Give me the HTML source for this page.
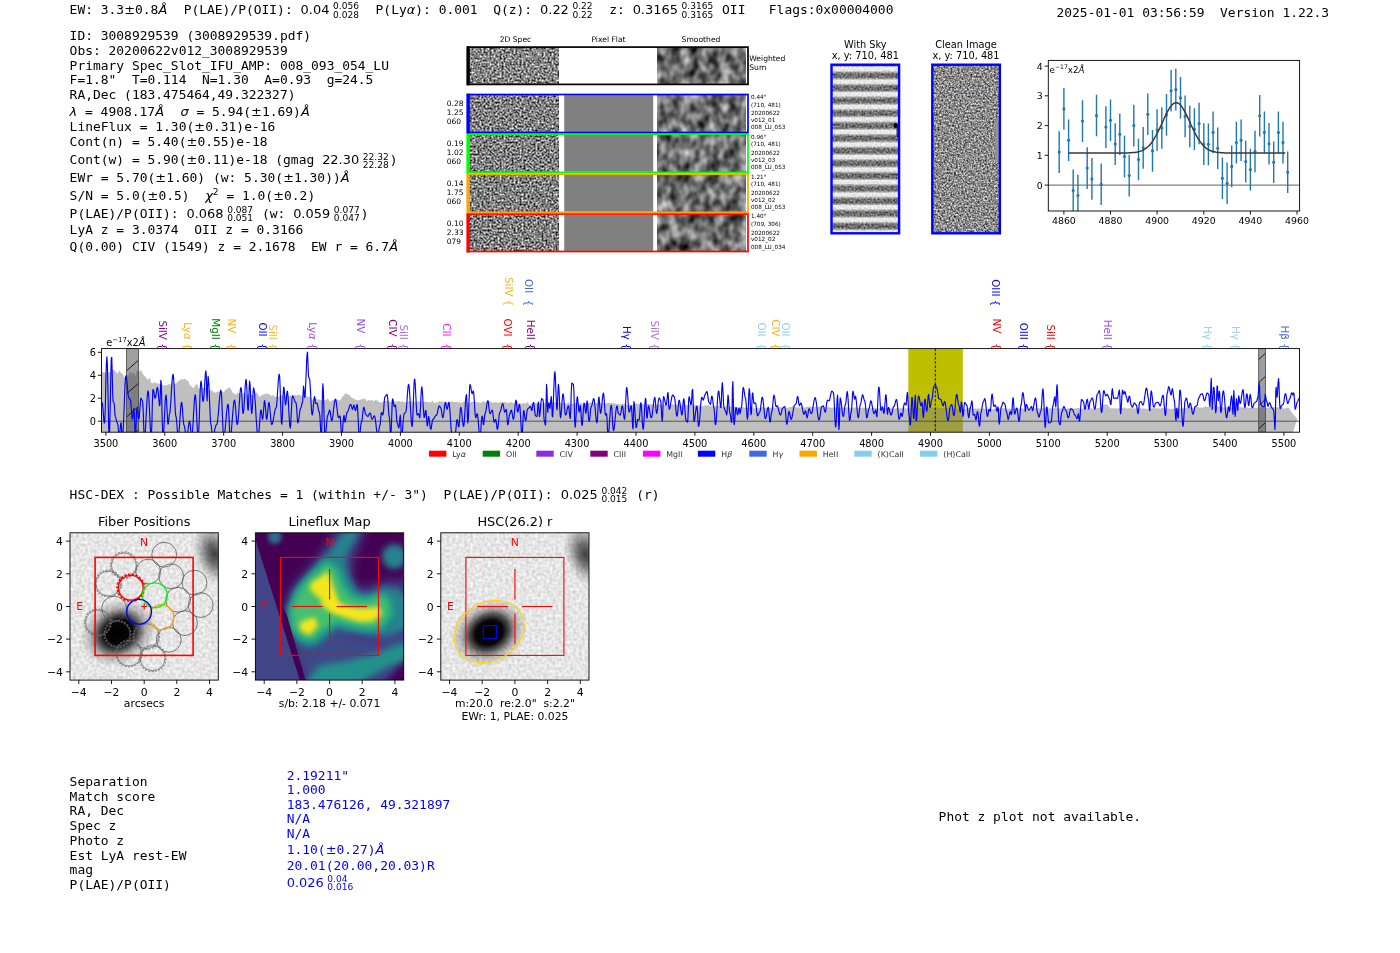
<!DOCTYPE html>
<html lang="en"><head><meta charset="utf-8"><title>Detection 3008929539</title>
<style>html,body{margin:0;padding:0;background:#fff;overflow:hidden}svg{display:block;will-change:transform;opacity:0.9999}text{white-space:pre}</style>
</head><body>
<svg width="1400" height="953" viewBox="0 0 1400 953">
<defs><filter id="nz1" x="0" y="0" width="100%" height="100%" filterUnits="objectBoundingBox" color-interpolation-filters="sRGB"><feTurbulence type="fractalNoise" baseFrequency="0.5" numOctaves="2" seed="3" stitchTiles="noStitch" result="t"/><feColorMatrix type="matrix" values="1.55 0 0 0 -0.255  1.55 0 0 0 -0.255  1.55 0 0 0 -0.255  0 0 0 0 1"/></filter><filter id="nz2" x="0" y="0" width="100%" height="100%" filterUnits="objectBoundingBox" color-interpolation-filters="sRGB"><feTurbulence type="fractalNoise" baseFrequency="0.5" numOctaves="2" seed="7" stitchTiles="noStitch" result="t"/><feColorMatrix type="matrix" values="1.6 0 0 0 -0.30000000000000004  1.6 0 0 0 -0.30000000000000004  1.6 0 0 0 -0.30000000000000004  0 0 0 0 1"/></filter><filter id="nz3" x="0" y="0" width="100%" height="100%" filterUnits="objectBoundingBox" color-interpolation-filters="sRGB"><feTurbulence type="fractalNoise" baseFrequency="0.5" numOctaves="2" seed="11" stitchTiles="noStitch" result="t"/><feColorMatrix type="matrix" values="1.6 0 0 0 -0.30000000000000004  1.6 0 0 0 -0.30000000000000004  1.6 0 0 0 -0.30000000000000004  0 0 0 0 1"/></filter><filter id="nz4" x="0" y="0" width="100%" height="100%" filterUnits="objectBoundingBox" color-interpolation-filters="sRGB"><feTurbulence type="fractalNoise" baseFrequency="0.5" numOctaves="2" seed="19" stitchTiles="noStitch" result="t"/><feColorMatrix type="matrix" values="1.6 0 0 0 -0.30000000000000004  1.6 0 0 0 -0.30000000000000004  1.6 0 0 0 -0.30000000000000004  0 0 0 0 1"/></filter><filter id="nz5" x="0" y="0" width="100%" height="100%" filterUnits="objectBoundingBox" color-interpolation-filters="sRGB"><feTurbulence type="fractalNoise" baseFrequency="0.5" numOctaves="2" seed="23" stitchTiles="noStitch" result="t"/><feColorMatrix type="matrix" values="1.6 0 0 0 -0.30000000000000004  1.6 0 0 0 -0.30000000000000004  1.6 0 0 0 -0.30000000000000004  0 0 0 0 1"/></filter><filter id="sm0" x="0" y="0" width="100%" height="100%" filterUnits="objectBoundingBox" color-interpolation-filters="sRGB"><feTurbulence type="fractalNoise" baseFrequency="0.1 0.075" numOctaves="2" seed="2" stitchTiles="noStitch" result="t"/><feColorMatrix type="matrix" values="1.15 0 0 0 -0.14499999999999996  1.15 0 0 0 -0.14499999999999996  1.15 0 0 0 -0.14499999999999996  0 0 0 0 1"/></filter><filter id="sm1" x="0" y="0" width="100%" height="100%" filterUnits="objectBoundingBox" color-interpolation-filters="sRGB"><feTurbulence type="fractalNoise" baseFrequency="0.1 0.075" numOctaves="2" seed="5" stitchTiles="noStitch" result="t"/><feColorMatrix type="matrix" values="1.15 0 0 0 -0.14499999999999996  1.15 0 0 0 -0.14499999999999996  1.15 0 0 0 -0.14499999999999996  0 0 0 0 1"/></filter><filter id="sm2" x="0" y="0" width="100%" height="100%" filterUnits="objectBoundingBox" color-interpolation-filters="sRGB"><feTurbulence type="fractalNoise" baseFrequency="0.1 0.075" numOctaves="2" seed="9" stitchTiles="noStitch" result="t"/><feColorMatrix type="matrix" values="1.15 0 0 0 -0.14499999999999996  1.15 0 0 0 -0.14499999999999996  1.15 0 0 0 -0.14499999999999996  0 0 0 0 1"/></filter><filter id="sm3" x="0" y="0" width="100%" height="100%" filterUnits="objectBoundingBox" color-interpolation-filters="sRGB"><feTurbulence type="fractalNoise" baseFrequency="0.1 0.075" numOctaves="2" seed="14" stitchTiles="noStitch" result="t"/><feColorMatrix type="matrix" values="1.15 0 0 0 -0.14499999999999996  1.15 0 0 0 -0.14499999999999996  1.15 0 0 0 -0.14499999999999996  0 0 0 0 1"/></filter><filter id="sm4" x="0" y="0" width="100%" height="100%" filterUnits="objectBoundingBox" color-interpolation-filters="sRGB"><feTurbulence type="fractalNoise" baseFrequency="0.1 0.075" numOctaves="2" seed="21" stitchTiles="noStitch" result="t"/><feColorMatrix type="matrix" values="1.15 0 0 0 -0.14499999999999996  1.15 0 0 0 -0.14499999999999996  1.15 0 0 0 -0.14499999999999996  0 0 0 0 1"/></filter></defs><defs><filter id="sky1" x="0" y="0" width="100%" height="100%" filterUnits="objectBoundingBox" color-interpolation-filters="sRGB"><feTurbulence type="fractalNoise" baseFrequency="0.5" numOctaves="2" seed="31" stitchTiles="noStitch" result="t"/><feColorMatrix type="matrix" values="1.5 0 0 0 -0.25  1.5 0 0 0 -0.25  1.5 0 0 0 -0.25  0 0 0 0 1"/></filter><filter id="sky2" x="0" y="0" width="100%" height="100%" filterUnits="objectBoundingBox" color-interpolation-filters="sRGB"><feTurbulence type="fractalNoise" baseFrequency="0.55" numOctaves="2" seed="37" stitchTiles="noStitch" result="t"/><feColorMatrix type="matrix" values="1.25 0 0 0 -0.07999999999999996  1.25 0 0 0 -0.07999999999999996  1.25 0 0 0 -0.07999999999999996  0 0 0 0 1"/></filter><linearGradient id="stripe" x1="0" y1="0" x2="0" y2="12.55" gradientUnits="userSpaceOnUse" spreadMethod="repeat"><stop offset="0" stop-color="#fff" stop-opacity="0.85"/><stop offset="0.26" stop-color="#fff" stop-opacity="0.8"/><stop offset="0.52" stop-color="#555" stop-opacity="0.48"/><stop offset="0.76" stop-color="#555" stop-opacity="0.48"/><stop offset="1" stop-color="#fff" stop-opacity="0.85"/></linearGradient></defs><defs><filter id="bg1" x="0" y="0" width="100%" height="100%" filterUnits="objectBoundingBox" color-interpolation-filters="sRGB"><feTurbulence type="fractalNoise" baseFrequency="0.34" numOctaves="1" seed="41" stitchTiles="noStitch" result="t"/><feColorMatrix type="matrix" values="0.27 0 0 0 0.765  0.27 0 0 0 0.765  0.27 0 0 0 0.765  0 0 0 0 1"/></filter><filter id="bg2" x="0" y="0" width="100%" height="100%" filterUnits="objectBoundingBox" color-interpolation-filters="sRGB"><feTurbulence type="fractalNoise" baseFrequency="0.34" numOctaves="1" seed="41" stitchTiles="noStitch" result="t"/><feColorMatrix type="matrix" values="0.27 0 0 0 0.765  0.27 0 0 0 0.765  0.27 0 0 0 0.765  0 0 0 0 1"/></filter><radialGradient id="gal"><stop offset="0" stop-color="#000" stop-opacity="1"/><stop offset="0.36" stop-color="#000" stop-opacity="0.97"/><stop offset="0.52" stop-color="#111" stop-opacity="0.72"/><stop offset="0.72" stop-color="#333" stop-opacity="0.3"/><stop offset="1" stop-color="#555" stop-opacity="0"/></radialGradient><radialGradient id="gal2"><stop offset="0" stop-color="#222" stop-opacity="0.85"/><stop offset="0.35" stop-color="#333" stop-opacity="0.66"/><stop offset="0.7" stop-color="#555" stop-opacity="0.3"/><stop offset="1" stop-color="#777" stop-opacity="0"/></radialGradient><filter id="blur3" x="-20%" y="-20%" width="140%" height="140%"><feGaussianBlur stdDeviation="3.2"/></filter><filter id="blur2" x="-20%" y="-20%" width="140%" height="140%"><feGaussianBlur stdDeviation="2.0"/></filter><filter id="blur25" x="-20%" y="-20%" width="140%" height="140%"><feGaussianBlur stdDeviation="2.4"/></filter><filter id="blur5" x="-30%" y="-30%" width="160%" height="160%"><feGaussianBlur stdDeviation="5.5"/></filter></defs>
<rect x="0" y="0" width="1400" height="953" fill="#fff"/>
<text font-family="'DejaVu Sans Mono','Liberation Mono',monospace" font-size="12.95" fill="#000" xml:space="preserve"><tspan x="69.60" y="13.9">EW: 3.3</tspan><tspan x="124.17" y="13.9" font-family="'DejaVu Sans','Liberation Sans',sans-serif">±</tspan><tspan x="135.02" y="13.9">0.8</tspan><tspan x="158.41" y="13.9" font-family="'DejaVu Sans','Liberation Sans',sans-serif" font-style="italic">Å</tspan><tspan x="168.07" y="13.9">  P(LAE)/P(OII): </tspan><tspan x="300.61" y="13.9" font-family="'DejaVu Sans','Liberation Sans',sans-serif">0.04</tspan><tspan x="333.04" y="9.30" font-family="'DejaVu Sans','Liberation Sans',sans-serif" font-size="9.06">0.056</tspan><tspan x="333.04" y="17.60" font-family="'DejaVu Sans','Liberation Sans',sans-serif" font-size="9.06">0.028</tspan><tspan x="360.00" y="13.9">  P(Ly</tspan><tspan x="406.77" y="13.9" font-family="'DejaVu Sans','Liberation Sans',sans-serif" font-style="italic">α</tspan><tspan x="415.31" y="13.9">): 0.001  Q(z): </tspan><tspan x="540.05" y="13.9" font-family="'DejaVu Sans','Liberation Sans',sans-serif">0.22</tspan><tspan x="572.49" y="9.30" font-family="'DejaVu Sans','Liberation Sans',sans-serif" font-size="9.06">0.22</tspan><tspan x="572.49" y="17.60" font-family="'DejaVu Sans','Liberation Sans',sans-serif" font-size="9.06">0.22</tspan><tspan x="593.67" y="13.9">  z: </tspan><tspan x="632.65" y="13.9" font-family="'DejaVu Sans','Liberation Sans',sans-serif">0.3165</tspan><tspan x="681.57" y="9.30" font-family="'DejaVu Sans','Liberation Sans',sans-serif" font-size="9.06">0.3165</tspan><tspan x="681.57" y="17.60" font-family="'DejaVu Sans','Liberation Sans',sans-serif" font-size="9.06">0.3165</tspan><tspan x="714.29" y="13.9"> OII   Flags:0x00004000</tspan></text>
<text font-family="'DejaVu Sans Mono','Liberation Mono',monospace" font-size="12.95" fill="#000" xml:space="preserve"><tspan x="1056.50" y="16.7">2025-01-01 03:56:59  Version 1.22.3</tspan></text>
<text font-family="'DejaVu Sans Mono','Liberation Mono',monospace" font-size="12.95" fill="#000" xml:space="preserve"><tspan x="69.60" y="40.0">ID: 3008929539 (3008929539.pdf)</tspan></text>
<text font-family="'DejaVu Sans Mono','Liberation Mono',monospace" font-size="12.95" fill="#000" xml:space="preserve"><tspan x="69.60" y="54.8">Obs: 20200622v012_3008929539</tspan></text>
<text font-family="'DejaVu Sans Mono','Liberation Mono',monospace" font-size="12.95" fill="#000" xml:space="preserve"><tspan x="69.60" y="69.6">Primary Spec_Slot_IFU_AMP: 008_093_054_LU</tspan></text>
<text font-family="'DejaVu Sans Mono','Liberation Mono',monospace" font-size="12.95" fill="#000" xml:space="preserve"><tspan x="69.60" y="84.4">F=1.8"  T=0.114  N=1.30  A=0.93  g=24.5</tspan></text>
<text font-family="'DejaVu Sans Mono','Liberation Mono',monospace" font-size="12.95" fill="#000" xml:space="preserve"><tspan x="69.60" y="99.3">RA,Dec (183.475464,49.322327)</tspan></text>
<text font-family="'DejaVu Sans Mono','Liberation Mono',monospace" font-size="12.95" fill="#000" xml:space="preserve"><tspan x="69.60" y="116.4" font-family="'DejaVu Sans','Liberation Sans',sans-serif" font-style="italic">λ</tspan><tspan x="77.26" y="116.4"> = 4908.17</tspan><tspan x="155.23" y="116.4" font-family="'DejaVu Sans','Liberation Sans',sans-serif" font-style="italic">Å</tspan><tspan x="164.89" y="116.4">  </tspan><tspan x="180.48" y="116.4" font-family="'DejaVu Sans','Liberation Sans',sans-serif" font-style="italic">σ</tspan><tspan x="188.69" y="116.4"> = 5.94(</tspan><tspan x="251.06" y="116.4" font-family="'DejaVu Sans','Liberation Sans',sans-serif">±</tspan><tspan x="261.91" y="116.4">1.69)</tspan><tspan x="300.89" y="116.4" font-family="'DejaVu Sans','Liberation Sans',sans-serif" font-style="italic">Å</tspan></text>
<text font-family="'DejaVu Sans Mono','Liberation Mono',monospace" font-size="12.95" fill="#000" xml:space="preserve"><tspan x="69.60" y="131.4">LineFlux = 1.30(</tspan><tspan x="194.34" y="131.4" font-family="'DejaVu Sans','Liberation Sans',sans-serif">±</tspan><tspan x="205.19" y="131.4">0.31)e-16</tspan></text>
<text font-family="'DejaVu Sans Mono','Liberation Mono',monospace" font-size="12.95" fill="#000" xml:space="preserve"><tspan x="69.60" y="146.2">Cont(n) = 5.40(</tspan><tspan x="186.54" y="146.2" font-family="'DejaVu Sans','Liberation Sans',sans-serif">±</tspan><tspan x="197.40" y="146.2">0.55)e-18</tspan></text>
<text font-family="'DejaVu Sans Mono','Liberation Mono',monospace" font-size="12.95" fill="#000" xml:space="preserve"><tspan x="69.60" y="164.3">Cont(w) = 5.90(</tspan><tspan x="186.54" y="164.3" font-family="'DejaVu Sans','Liberation Sans',sans-serif">±</tspan><tspan x="197.40" y="164.3">0.11)e-18 (gmag </tspan><tspan x="322.14" y="164.3" font-family="'DejaVu Sans','Liberation Sans',sans-serif">22.30</tspan><tspan x="362.81" y="159.70" font-family="'DejaVu Sans','Liberation Sans',sans-serif" font-size="9.06">22.32</tspan><tspan x="362.81" y="168.00" font-family="'DejaVu Sans','Liberation Sans',sans-serif" font-size="9.06">22.28</tspan><tspan x="389.76" y="164.3">)</tspan></text>
<text font-family="'DejaVu Sans Mono','Liberation Mono',monospace" font-size="12.95" fill="#000" xml:space="preserve"><tspan x="69.60" y="182.3">EWr = 5.70(</tspan><tspan x="155.36" y="182.3" font-family="'DejaVu Sans','Liberation Sans',sans-serif">±</tspan><tspan x="166.21" y="182.3">1.60) (w: 5.30(</tspan><tspan x="283.15" y="182.3" font-family="'DejaVu Sans','Liberation Sans',sans-serif">±</tspan><tspan x="294.01" y="182.3">1.30))</tspan><tspan x="340.78" y="182.3" font-family="'DejaVu Sans','Liberation Sans',sans-serif" font-style="italic">Å</tspan></text>
<text font-family="'DejaVu Sans Mono','Liberation Mono',monospace" font-size="12.95" fill="#000" xml:space="preserve"><tspan x="69.60" y="199.9">S/N = 5.0(</tspan><tspan x="147.56" y="199.9" font-family="'DejaVu Sans','Liberation Sans',sans-serif">±</tspan><tspan x="158.41" y="199.9">0.5)  </tspan><tspan x="205.19" y="199.9" font-family="'DejaVu Sans','Liberation Sans',sans-serif" font-style="italic">χ</tspan><tspan x="212.86" y="195.10" font-family="'DejaVu Sans','Liberation Sans',sans-serif" font-size="9.06">2</tspan><tspan x="218.62" y="199.9"> = 1.0(</tspan><tspan x="273.20" y="199.9" font-family="'DejaVu Sans','Liberation Sans',sans-serif">±</tspan><tspan x="284.05" y="199.9">0.2)</tspan></text>
<text font-family="'DejaVu Sans Mono','Liberation Mono',monospace" font-size="12.95" fill="#000" xml:space="preserve"><tspan x="69.60" y="217.5">P(LAE)/P(OII): </tspan><tspan x="186.54" y="217.5" font-family="'DejaVu Sans','Liberation Sans',sans-serif">0.068</tspan><tspan x="227.22" y="212.90" font-family="'DejaVu Sans','Liberation Sans',sans-serif" font-size="9.06">0.087</tspan><tspan x="227.22" y="221.20" font-family="'DejaVu Sans','Liberation Sans',sans-serif" font-size="9.06">0.051</tspan><tspan x="254.17" y="217.5"> (w: </tspan><tspan x="293.15" y="217.5" font-family="'DejaVu Sans','Liberation Sans',sans-serif">0.059</tspan><tspan x="333.83" y="212.90" font-family="'DejaVu Sans','Liberation Sans',sans-serif" font-size="9.06">0.077</tspan><tspan x="333.83" y="221.20" font-family="'DejaVu Sans','Liberation Sans',sans-serif" font-size="9.06">0.047</tspan><tspan x="360.78" y="217.5">)</tspan></text>
<text font-family="'DejaVu Sans Mono','Liberation Mono',monospace" font-size="12.95" fill="#000" xml:space="preserve"><tspan x="69.60" y="234.3">LyA z = 3.0374  OII z = 0.3166</tspan></text>
<text font-family="'DejaVu Sans Mono','Liberation Mono',monospace" font-size="12.95" fill="#000" xml:space="preserve"><tspan x="69.60" y="251.1">Q(0.00) CIV (1549) z = 2.1678  EW r = 6.7</tspan><tspan x="389.25" y="251.1" font-family="'DejaVu Sans','Liberation Sans',sans-serif" font-style="italic">Å</tspan></text>
<text font-family="'DejaVu Sans Mono','Liberation Mono',monospace" font-size="12.95" fill="#000" xml:space="preserve"><tspan x="69.60" y="498.5">HSC-DEX : Possible Matches = 1 (within +/- 3")  P(LAE)/P(OII): </tspan><tspan x="560.77" y="498.5" font-family="'DejaVu Sans','Liberation Sans',sans-serif">0.025</tspan><tspan x="601.44" y="493.90" font-family="'DejaVu Sans','Liberation Sans',sans-serif" font-size="9.06">0.042</tspan><tspan x="601.44" y="502.20" font-family="'DejaVu Sans','Liberation Sans',sans-serif" font-size="9.06">0.015</tspan><tspan x="628.39" y="498.5"> (r)</tspan></text>
<text font-family="'DejaVu Sans Mono','Liberation Mono',monospace" font-size="12.95" fill="#000" xml:space="preserve"><tspan x="69.60" y="786.0">Separation</tspan></text>
<text font-family="'DejaVu Sans Mono','Liberation Mono',monospace" font-size="12.95" fill="#000" xml:space="preserve"><tspan x="69.60" y="800.7">Match score</tspan></text>
<text font-family="'DejaVu Sans Mono','Liberation Mono',monospace" font-size="12.95" fill="#000" xml:space="preserve"><tspan x="69.60" y="815.4">RA, Dec</tspan></text>
<text font-family="'DejaVu Sans Mono','Liberation Mono',monospace" font-size="12.95" fill="#000" xml:space="preserve"><tspan x="69.60" y="830.1">Spec z</tspan></text>
<text font-family="'DejaVu Sans Mono','Liberation Mono',monospace" font-size="12.95" fill="#000" xml:space="preserve"><tspan x="69.60" y="844.8">Photo z</tspan></text>
<text font-family="'DejaVu Sans Mono','Liberation Mono',monospace" font-size="12.95" fill="#000" xml:space="preserve"><tspan x="69.60" y="859.5">Est LyA rest-EW</tspan></text>
<text font-family="'DejaVu Sans Mono','Liberation Mono',monospace" font-size="12.95" fill="#000" xml:space="preserve"><tspan x="69.60" y="874.2">mag</tspan></text>
<text font-family="'DejaVu Sans Mono','Liberation Mono',monospace" font-size="12.95" fill="#000" xml:space="preserve"><tspan x="69.60" y="888.9">P(LAE)/P(OII)</tspan></text>
<text font-family="'DejaVu Sans Mono','Liberation Mono',monospace" font-size="12.95" fill="#0000ff" xml:space="preserve"><tspan x="286.70" y="779.6">2.19211"</tspan></text>
<text font-family="'DejaVu Sans Mono','Liberation Mono',monospace" font-size="12.95" fill="#0000ff" xml:space="preserve"><tspan x="286.70" y="794.2">1.000</tspan></text>
<text font-family="'DejaVu Sans Mono','Liberation Mono',monospace" font-size="12.95" fill="#0000ff" xml:space="preserve"><tspan x="286.70" y="808.6">183.476126, 49.321897</tspan></text>
<text font-family="'DejaVu Sans Mono','Liberation Mono',monospace" font-size="12.95" fill="#0000ff" xml:space="preserve"><tspan x="286.70" y="823.0">N/A</tspan></text>
<text font-family="'DejaVu Sans Mono','Liberation Mono',monospace" font-size="12.95" fill="#0000ff" xml:space="preserve"><tspan x="286.70" y="837.5">N/A</tspan></text>
<text font-family="'DejaVu Sans Mono','Liberation Mono',monospace" font-size="12.95" fill="#0000ff" xml:space="preserve"><tspan x="286.70" y="853.5">1.10(</tspan><tspan x="325.68" y="853.5" font-family="'DejaVu Sans','Liberation Sans',sans-serif">±</tspan><tspan x="336.53" y="853.5">0.27)</tspan><tspan x="375.51" y="853.5" font-family="'DejaVu Sans','Liberation Sans',sans-serif" font-style="italic">Å</tspan></text>
<text font-family="'DejaVu Sans Mono','Liberation Mono',monospace" font-size="12.95" fill="#0000ff" xml:space="preserve"><tspan x="286.70" y="869.8">20.01(20.00,20.03)R</tspan></text>
<text font-family="'DejaVu Sans Mono','Liberation Mono',monospace" font-size="12.95" fill="#0000ff" xml:space="preserve"><tspan x="286.70" y="886.5" font-family="'DejaVu Sans','Liberation Sans',sans-serif">0.026</tspan><tspan x="327.37" y="881.90" font-family="'DejaVu Sans','Liberation Sans',sans-serif" font-size="9.06">0.04</tspan><tspan x="327.37" y="890.20" font-family="'DejaVu Sans','Liberation Sans',sans-serif" font-size="9.06">0.016</tspan></text>
<text font-family="'DejaVu Sans Mono','Liberation Mono',monospace" font-size="12.95" fill="#000" xml:space="preserve"><tspan x="938.60" y="821.2">Phot z plot not available.</tspan></text>
<text x="515.5" y="42.0" font-family="'DejaVu Sans','Liberation Sans',sans-serif" font-size="7.6" fill="#000" text-anchor="middle" xml:space="preserve" >2D Spec</text>
<text x="608.5" y="42.0" font-family="'DejaVu Sans','Liberation Sans',sans-serif" font-size="7.6" fill="#000" text-anchor="middle" xml:space="preserve" >Pixel Flat</text>
<text x="701.0" y="42.0" font-family="'DejaVu Sans','Liberation Sans',sans-serif" font-size="7.6" fill="#000" text-anchor="middle" xml:space="preserve" >Smoothed</text>
<text x="749.3" y="61.0" font-family="'DejaVu Sans','Liberation Sans',sans-serif" font-size="7.6" fill="#000" text-anchor="start" xml:space="preserve" >Weighted</text>
<text x="749.3" y="69.8" font-family="'DejaVu Sans','Liberation Sans',sans-serif" font-size="7.6" fill="#000" text-anchor="start" xml:space="preserve" >Sum</text>
<rect x="469.6" y="47.8" width="89.2" height="36.0" fill="#808080" filter="url(#nz1)"/>
<rect x="657.6" y="47.8" width="88.4" height="36.0" fill="#777" filter="url(#sm0)"/>
<rect x="469.6" y="95.2" width="89.2" height="36.7" fill="#808080" filter="url(#nz2)"/>
<rect x="564.2" y="95.2" width="89.0" height="36.7" fill="#808080"/>
<rect x="657.6" y="95.2" width="88.4" height="36.7" fill="#777" filter="url(#sm1)"/>
<rect x="469.6" y="134.9" width="89.2" height="36.9" fill="#808080" filter="url(#nz3)"/>
<rect x="564.2" y="134.9" width="89.0" height="36.9" fill="#808080"/>
<rect x="657.6" y="134.9" width="88.4" height="36.9" fill="#777" filter="url(#sm2)"/>
<rect x="469.6" y="174.8" width="89.2" height="36.9" fill="#808080" filter="url(#nz4)"/>
<rect x="564.2" y="174.8" width="89.0" height="36.9" fill="#808080"/>
<rect x="657.6" y="174.8" width="88.4" height="36.9" fill="#777" filter="url(#sm3)"/>
<rect x="469.6" y="214.7" width="89.2" height="36.2" fill="#808080" filter="url(#nz5)"/>
<rect x="564.2" y="214.7" width="89.0" height="36.2" fill="#808080"/>
<rect x="657.6" y="214.7" width="88.4" height="36.2" fill="#777" filter="url(#sm4)"/>
<rect x="467.5" y="214.0" width="280.5" height="37.5" fill="none" stroke="#ff0000" stroke-width="1.7"/>
<rect x="466.6" y="213.2" width="3.2" height="39.2" fill="#ff0000"/>
<rect x="467.5" y="174.2" width="280.5" height="38.2" fill="none" stroke="#ffa500" stroke-width="1.7"/>
<rect x="466.6" y="173.3" width="3.2" height="39.9" fill="#ffa500"/>
<rect x="467.5" y="134.2" width="280.5" height="38.2" fill="none" stroke="#00ff00" stroke-width="1.7"/>
<rect x="466.6" y="133.4" width="3.2" height="39.9" fill="#00ff00"/>
<rect x="467.5" y="94.5" width="280.5" height="38.0" fill="none" stroke="#0000ff" stroke-width="1.7"/>
<rect x="466.6" y="93.7" width="3.2" height="39.7" fill="#0000ff"/>
<rect x="467.5" y="47.1" width="280.5" height="37.3" fill="none" stroke="#000000" stroke-width="1.7"/>
<rect x="466.6" y="46.3" width="3.2" height="39.0" fill="#000000"/>
<text x="446.8" y="106.10000000000001" font-family="'DejaVu Sans','Liberation Sans',sans-serif" font-size="7.5" fill="#000" text-anchor="start" xml:space="preserve" >0.28</text>
<text x="446.8" y="115.10000000000001" font-family="'DejaVu Sans','Liberation Sans',sans-serif" font-size="7.5" fill="#000" text-anchor="start" xml:space="preserve" >1.25</text>
<text x="446.8" y="124.10000000000001" font-family="'DejaVu Sans','Liberation Sans',sans-serif" font-size="7.5" fill="#000" text-anchor="start" xml:space="preserve" >060</text>
<text x="751.0" y="98.9" font-family="'DejaVu Sans','Liberation Sans',sans-serif" font-size="5.7" fill="#000" text-anchor="start" xml:space="preserve" >0.44"</text>
<text x="751.0" y="106.7" font-family="'DejaVu Sans','Liberation Sans',sans-serif" font-size="5.7" fill="#000" text-anchor="start" xml:space="preserve" >(710, 481)</text>
<text x="751.0" y="115.2" font-family="'DejaVu Sans','Liberation Sans',sans-serif" font-size="5.7" fill="#000" text-anchor="start" xml:space="preserve" >20200622</text>
<text x="751.0" y="121.9" font-family="'DejaVu Sans','Liberation Sans',sans-serif" font-size="5.7" fill="#000" text-anchor="start" xml:space="preserve" >v012_01</text>
<text x="751.0" y="129.0" font-family="'DejaVu Sans','Liberation Sans',sans-serif" font-size="5.7" fill="#000" text-anchor="start" xml:space="preserve" >008_LU_053</text>
<text x="446.8" y="145.8" font-family="'DejaVu Sans','Liberation Sans',sans-serif" font-size="7.5" fill="#000" text-anchor="start" xml:space="preserve" >0.19</text>
<text x="446.8" y="154.8" font-family="'DejaVu Sans','Liberation Sans',sans-serif" font-size="7.5" fill="#000" text-anchor="start" xml:space="preserve" >1.02</text>
<text x="446.8" y="163.8" font-family="'DejaVu Sans','Liberation Sans',sans-serif" font-size="7.5" fill="#000" text-anchor="start" xml:space="preserve" >060</text>
<text x="751.0" y="138.6" font-family="'DejaVu Sans','Liberation Sans',sans-serif" font-size="5.7" fill="#000" text-anchor="start" xml:space="preserve" >0.96"</text>
<text x="751.0" y="146.4" font-family="'DejaVu Sans','Liberation Sans',sans-serif" font-size="5.7" fill="#000" text-anchor="start" xml:space="preserve" >(710, 481)</text>
<text x="751.0" y="154.9" font-family="'DejaVu Sans','Liberation Sans',sans-serif" font-size="5.7" fill="#000" text-anchor="start" xml:space="preserve" >20200622</text>
<text x="751.0" y="161.6" font-family="'DejaVu Sans','Liberation Sans',sans-serif" font-size="5.7" fill="#000" text-anchor="start" xml:space="preserve" >v012_03</text>
<text x="751.0" y="168.7" font-family="'DejaVu Sans','Liberation Sans',sans-serif" font-size="5.7" fill="#000" text-anchor="start" xml:space="preserve" >008_LU_053</text>
<text x="446.8" y="185.70000000000002" font-family="'DejaVu Sans','Liberation Sans',sans-serif" font-size="7.5" fill="#000" text-anchor="start" xml:space="preserve" >0.14</text>
<text x="446.8" y="194.70000000000002" font-family="'DejaVu Sans','Liberation Sans',sans-serif" font-size="7.5" fill="#000" text-anchor="start" xml:space="preserve" >1.75</text>
<text x="446.8" y="203.70000000000002" font-family="'DejaVu Sans','Liberation Sans',sans-serif" font-size="7.5" fill="#000" text-anchor="start" xml:space="preserve" >060</text>
<text x="751.0" y="178.5" font-family="'DejaVu Sans','Liberation Sans',sans-serif" font-size="5.7" fill="#000" text-anchor="start" xml:space="preserve" >1.21"</text>
<text x="751.0" y="186.3" font-family="'DejaVu Sans','Liberation Sans',sans-serif" font-size="5.7" fill="#000" text-anchor="start" xml:space="preserve" >(710, 481)</text>
<text x="751.0" y="194.8" font-family="'DejaVu Sans','Liberation Sans',sans-serif" font-size="5.7" fill="#000" text-anchor="start" xml:space="preserve" >20200622</text>
<text x="751.0" y="201.5" font-family="'DejaVu Sans','Liberation Sans',sans-serif" font-size="5.7" fill="#000" text-anchor="start" xml:space="preserve" >v012_02</text>
<text x="751.0" y="208.60000000000002" font-family="'DejaVu Sans','Liberation Sans',sans-serif" font-size="5.7" fill="#000" text-anchor="start" xml:space="preserve" >008_LU_053</text>
<text x="446.8" y="225.6" font-family="'DejaVu Sans','Liberation Sans',sans-serif" font-size="7.5" fill="#000" text-anchor="start" xml:space="preserve" >0.10</text>
<text x="446.8" y="234.6" font-family="'DejaVu Sans','Liberation Sans',sans-serif" font-size="7.5" fill="#000" text-anchor="start" xml:space="preserve" >2.33</text>
<text x="446.8" y="243.6" font-family="'DejaVu Sans','Liberation Sans',sans-serif" font-size="7.5" fill="#000" text-anchor="start" xml:space="preserve" >079</text>
<text x="751.0" y="218.39999999999998" font-family="'DejaVu Sans','Liberation Sans',sans-serif" font-size="5.7" fill="#000" text-anchor="start" xml:space="preserve" >1.40"</text>
<text x="751.0" y="226.2" font-family="'DejaVu Sans','Liberation Sans',sans-serif" font-size="5.7" fill="#000" text-anchor="start" xml:space="preserve" >(709, 306)</text>
<text x="751.0" y="234.7" font-family="'DejaVu Sans','Liberation Sans',sans-serif" font-size="5.7" fill="#000" text-anchor="start" xml:space="preserve" >20200622</text>
<text x="751.0" y="241.39999999999998" font-family="'DejaVu Sans','Liberation Sans',sans-serif" font-size="5.7" fill="#000" text-anchor="start" xml:space="preserve" >v012_02</text>
<text x="751.0" y="248.5" font-family="'DejaVu Sans','Liberation Sans',sans-serif" font-size="5.7" fill="#000" text-anchor="start" xml:space="preserve" >008_LU_034</text>
<text x="865.3" y="48.3" font-family="'DejaVu Sans','Liberation Sans',sans-serif" font-size="9.8" fill="#000" text-anchor="middle" xml:space="preserve" >With Sky</text>
<text x="865.3" y="59.2" font-family="'DejaVu Sans','Liberation Sans',sans-serif" font-size="9.8" fill="#000" text-anchor="middle" xml:space="preserve" >x, y: 710, 481</text>
<text x="966.0" y="48.3" font-family="'DejaVu Sans','Liberation Sans',sans-serif" font-size="9.8" fill="#000" text-anchor="middle" xml:space="preserve" >Clean Image</text>
<text x="966.0" y="59.2" font-family="'DejaVu Sans','Liberation Sans',sans-serif" font-size="9.8" fill="#000" text-anchor="middle" xml:space="preserve" >x, y: 710, 481</text>
<rect x="831.5" y="64.8" width="67.5" height="168.5" fill="#808080" filter="url(#sky1)"/>
<g transform="translate(0,55.02)"><rect x="831.5" y="9.78" width="67.5" height="168.5" fill="url(#stripe)"/></g>
<ellipse cx="895.6" cy="125.3" rx="2.0" ry="2.6" fill="#000"/><rect x="896.6" y="125" width="1.2" height="12" fill="#111"/>
<rect x="932.4" y="64.8" width="67.5" height="168.5" fill="#808080" filter="url(#sky2)"/>
<rect x="995.2" y="120" width="4" height="42" fill="#929292"/>
<rect x="831.5" y="64.7" width="67.6" height="168.6" fill="none" stroke="#0000ff" stroke-width="2.4"/>
<rect x="932.3" y="64.7" width="67.6" height="168.6" fill="none" stroke="#0000ff" stroke-width="2.4"/>
<clipPath id="cl1"><rect x="1048.3" y="60.4" width="251.3" height="150.6"/></clipPath>
<g clip-path="url(#cl1)"><line x1="1048.3" x2="1299.6" y1="185.1" y2="185.1" stroke="#808080" stroke-width="1.4"/><line x1="1059.2" x2="1059.2" y1="131.3" y2="172.9" stroke="#1f77b4" stroke-width="1.4"/><circle cx="1059.2" cy="152.1" r="1.55" fill="#1f77b4"/><line x1="1063.9" x2="1063.9" y1="88.1" y2="129.8" stroke="#1f77b4" stroke-width="1.4"/><circle cx="1063.9" cy="108.9" r="1.55" fill="#1f77b4"/><line x1="1068.6" x2="1068.6" y1="119.4" y2="161.0" stroke="#1f77b4" stroke-width="1.4"/><circle cx="1068.6" cy="140.2" r="1.55" fill="#1f77b4"/><line x1="1073.2" x2="1073.2" y1="169.6" y2="211.3" stroke="#1f77b4" stroke-width="1.4"/><circle cx="1073.2" cy="190.5" r="1.55" fill="#1f77b4"/><line x1="1077.9" x2="1077.9" y1="174.7" y2="216.3" stroke="#1f77b4" stroke-width="1.4"/><circle cx="1077.9" cy="195.5" r="1.55" fill="#1f77b4"/><line x1="1082.5" x2="1082.5" y1="100.3" y2="142.0" stroke="#1f77b4" stroke-width="1.4"/><circle cx="1082.5" cy="121.1" r="1.55" fill="#1f77b4"/><line x1="1087.2" x2="1087.2" y1="147.3" y2="189.0" stroke="#1f77b4" stroke-width="1.4"/><circle cx="1087.2" cy="168.1" r="1.55" fill="#1f77b4"/><line x1="1091.9" x2="1091.9" y1="158.0" y2="199.7" stroke="#1f77b4" stroke-width="1.4"/><circle cx="1091.9" cy="178.9" r="1.55" fill="#1f77b4"/><line x1="1096.5" x2="1096.5" y1="94.7" y2="136.3" stroke="#1f77b4" stroke-width="1.4"/><circle cx="1096.5" cy="115.5" r="1.55" fill="#1f77b4"/><line x1="1101.2" x2="1101.2" y1="163.4" y2="205.0" stroke="#1f77b4" stroke-width="1.4"/><circle cx="1101.2" cy="184.2" r="1.55" fill="#1f77b4"/><line x1="1105.9" x2="1105.9" y1="106.3" y2="147.9" stroke="#1f77b4" stroke-width="1.4"/><circle cx="1105.9" cy="127.1" r="1.55" fill="#1f77b4"/><line x1="1110.5" x2="1110.5" y1="99.4" y2="141.1" stroke="#1f77b4" stroke-width="1.4"/><circle cx="1110.5" cy="120.2" r="1.55" fill="#1f77b4"/><line x1="1115.2" x2="1115.2" y1="123.2" y2="164.9" stroke="#1f77b4" stroke-width="1.4"/><circle cx="1115.2" cy="144.0" r="1.55" fill="#1f77b4"/><line x1="1119.8" x2="1119.8" y1="113.4" y2="155.1" stroke="#1f77b4" stroke-width="1.4"/><circle cx="1119.8" cy="134.2" r="1.55" fill="#1f77b4"/><line x1="1124.5" x2="1124.5" y1="135.7" y2="177.4" stroke="#1f77b4" stroke-width="1.4"/><circle cx="1124.5" cy="156.5" r="1.55" fill="#1f77b4"/><line x1="1129.2" x2="1129.2" y1="154.8" y2="196.4" stroke="#1f77b4" stroke-width="1.4"/><circle cx="1129.2" cy="175.6" r="1.55" fill="#1f77b4"/><line x1="1133.8" x2="1133.8" y1="104.8" y2="146.4" stroke="#1f77b4" stroke-width="1.4"/><circle cx="1133.8" cy="125.6" r="1.55" fill="#1f77b4"/><line x1="1138.5" x2="1138.5" y1="138.7" y2="180.3" stroke="#1f77b4" stroke-width="1.4"/><circle cx="1138.5" cy="159.5" r="1.55" fill="#1f77b4"/><line x1="1143.2" x2="1143.2" y1="127.1" y2="168.7" stroke="#1f77b4" stroke-width="1.4"/><circle cx="1143.2" cy="147.9" r="1.55" fill="#1f77b4"/><line x1="1147.8" x2="1147.8" y1="93.5" y2="135.1" stroke="#1f77b4" stroke-width="1.4"/><circle cx="1147.8" cy="114.3" r="1.55" fill="#1f77b4"/><line x1="1152.5" x2="1152.5" y1="130.1" y2="171.7" stroke="#1f77b4" stroke-width="1.4"/><circle cx="1152.5" cy="150.9" r="1.55" fill="#1f77b4"/><line x1="1157.1" x2="1157.1" y1="109.2" y2="150.9" stroke="#1f77b4" stroke-width="1.4"/><circle cx="1157.1" cy="130.1" r="1.55" fill="#1f77b4"/><line x1="1161.8" x2="1161.8" y1="107.2" y2="148.8" stroke="#1f77b4" stroke-width="1.4"/><circle cx="1161.8" cy="128.0" r="1.55" fill="#1f77b4"/><line x1="1166.5" x2="1166.5" y1="94.1" y2="135.7" stroke="#1f77b4" stroke-width="1.4"/><circle cx="1166.5" cy="114.9" r="1.55" fill="#1f77b4"/><line x1="1171.1" x2="1171.1" y1="70.0" y2="111.6" stroke="#1f77b4" stroke-width="1.4"/><circle cx="1171.1" cy="90.8" r="1.55" fill="#1f77b4"/><line x1="1175.8" x2="1175.8" y1="68.8" y2="110.4" stroke="#1f77b4" stroke-width="1.4"/><circle cx="1175.8" cy="89.6" r="1.55" fill="#1f77b4"/><line x1="1180.5" x2="1180.5" y1="77.1" y2="118.8" stroke="#1f77b4" stroke-width="1.4"/><circle cx="1180.5" cy="97.9" r="1.55" fill="#1f77b4"/><line x1="1185.1" x2="1185.1" y1="95.6" y2="137.2" stroke="#1f77b4" stroke-width="1.4"/><circle cx="1185.1" cy="116.4" r="1.55" fill="#1f77b4"/><line x1="1189.8" x2="1189.8" y1="105.7" y2="147.3" stroke="#1f77b4" stroke-width="1.4"/><circle cx="1189.8" cy="126.5" r="1.55" fill="#1f77b4"/><line x1="1194.4" x2="1194.4" y1="108.3" y2="150.0" stroke="#1f77b4" stroke-width="1.4"/><circle cx="1194.4" cy="129.2" r="1.55" fill="#1f77b4"/><line x1="1199.1" x2="1199.1" y1="102.7" y2="144.3" stroke="#1f77b4" stroke-width="1.4"/><circle cx="1199.1" cy="123.5" r="1.55" fill="#1f77b4"/><line x1="1203.8" x2="1203.8" y1="123.2" y2="164.9" stroke="#1f77b4" stroke-width="1.4"/><circle cx="1203.8" cy="144.0" r="1.55" fill="#1f77b4"/><line x1="1208.4" x2="1208.4" y1="123.5" y2="165.2" stroke="#1f77b4" stroke-width="1.4"/><circle cx="1208.4" cy="144.3" r="1.55" fill="#1f77b4"/><line x1="1213.1" x2="1213.1" y1="111.6" y2="153.3" stroke="#1f77b4" stroke-width="1.4"/><circle cx="1213.1" cy="132.4" r="1.55" fill="#1f77b4"/><line x1="1217.7" x2="1217.7" y1="127.4" y2="169.0" stroke="#1f77b4" stroke-width="1.4"/><circle cx="1217.7" cy="148.2" r="1.55" fill="#1f77b4"/><line x1="1222.4" x2="1222.4" y1="157.4" y2="199.1" stroke="#1f77b4" stroke-width="1.4"/><circle cx="1222.4" cy="178.3" r="1.55" fill="#1f77b4"/><line x1="1227.1" x2="1227.1" y1="162.5" y2="204.1" stroke="#1f77b4" stroke-width="1.4"/><circle cx="1227.1" cy="183.3" r="1.55" fill="#1f77b4"/><line x1="1231.7" x2="1231.7" y1="145.5" y2="187.2" stroke="#1f77b4" stroke-width="1.4"/><circle cx="1231.7" cy="166.4" r="1.55" fill="#1f77b4"/><line x1="1236.4" x2="1236.4" y1="121.7" y2="163.4" stroke="#1f77b4" stroke-width="1.4"/><circle cx="1236.4" cy="142.6" r="1.55" fill="#1f77b4"/><line x1="1241.1" x2="1241.1" y1="119.4" y2="161.0" stroke="#1f77b4" stroke-width="1.4"/><circle cx="1241.1" cy="140.2" r="1.55" fill="#1f77b4"/><line x1="1245.7" x2="1245.7" y1="140.8" y2="182.4" stroke="#1f77b4" stroke-width="1.4"/><circle cx="1245.7" cy="161.6" r="1.55" fill="#1f77b4"/><line x1="1250.4" x2="1250.4" y1="148.8" y2="190.5" stroke="#1f77b4" stroke-width="1.4"/><circle cx="1250.4" cy="169.6" r="1.55" fill="#1f77b4"/><line x1="1255.0" x2="1255.0" y1="130.7" y2="172.3" stroke="#1f77b4" stroke-width="1.4"/><circle cx="1255.0" cy="151.5" r="1.55" fill="#1f77b4"/><line x1="1259.7" x2="1259.7" y1="95.0" y2="136.6" stroke="#1f77b4" stroke-width="1.4"/><circle cx="1259.7" cy="115.8" r="1.55" fill="#1f77b4"/><line x1="1264.4" x2="1264.4" y1="111.6" y2="153.3" stroke="#1f77b4" stroke-width="1.4"/><circle cx="1264.4" cy="132.4" r="1.55" fill="#1f77b4"/><line x1="1269.0" x2="1269.0" y1="122.9" y2="164.6" stroke="#1f77b4" stroke-width="1.4"/><circle cx="1269.0" cy="143.7" r="1.55" fill="#1f77b4"/><line x1="1273.7" x2="1273.7" y1="141.4" y2="183.0" stroke="#1f77b4" stroke-width="1.4"/><circle cx="1273.7" cy="162.2" r="1.55" fill="#1f77b4"/><line x1="1278.4" x2="1278.4" y1="111.6" y2="153.3" stroke="#1f77b4" stroke-width="1.4"/><circle cx="1278.4" cy="132.4" r="1.55" fill="#1f77b4"/><line x1="1283.0" x2="1283.0" y1="121.7" y2="163.4" stroke="#1f77b4" stroke-width="1.4"/><circle cx="1283.0" cy="142.6" r="1.55" fill="#1f77b4"/><line x1="1287.7" x2="1287.7" y1="151.5" y2="193.1" stroke="#1f77b4" stroke-width="1.4"/><circle cx="1287.7" cy="172.3" r="1.55" fill="#1f77b4"/><polyline points="1068.6,153.0 1069.7,153.0 1070.9,153.0 1072.1,153.0 1073.2,153.0 1074.4,153.0 1075.6,153.0 1076.7,153.0 1077.9,153.0 1079.1,153.0 1080.2,153.0 1081.4,153.0 1082.5,153.0 1083.7,153.0 1084.9,153.0 1086.0,153.0 1087.2,153.0 1088.4,153.0 1089.5,153.0 1090.7,153.0 1091.9,153.0 1093.0,153.0 1094.2,153.0 1095.4,153.0 1096.5,153.0 1097.7,153.0 1098.9,153.0 1100.0,153.0 1101.2,153.0 1102.4,153.0 1103.5,153.0 1104.7,153.0 1105.9,153.0 1107.0,153.0 1108.2,153.0 1109.4,153.0 1110.5,153.0 1111.7,153.0 1112.9,153.0 1114.0,153.0 1115.2,153.0 1116.3,153.0 1117.5,153.0 1118.7,153.0 1119.8,153.0 1121.0,153.0 1122.2,152.9 1123.3,152.9 1124.5,152.9 1125.7,152.9 1126.8,152.9 1128.0,152.9 1129.2,152.8 1130.3,152.8 1131.5,152.7 1132.7,152.6 1133.8,152.5 1135.0,152.4 1136.2,152.2 1137.3,152.0 1138.5,151.7 1139.7,151.4 1140.8,151.0 1142.0,150.6 1143.2,150.0 1144.3,149.4 1145.5,148.7 1146.7,147.8 1147.8,146.8 1149.0,145.7 1150.1,144.4 1151.3,143.0 1152.5,141.4 1153.6,139.6 1154.8,137.7 1156.0,135.6 1157.1,133.4 1158.3,131.1 1159.5,128.7 1160.6,126.2 1161.8,123.7 1163.0,121.1 1164.1,118.5 1165.3,116.1 1166.5,113.7 1167.6,111.4 1168.8,109.4 1170.0,107.5 1171.1,105.9 1172.3,104.6 1173.5,103.7 1174.6,103.0 1175.8,102.7 1177.0,102.8 1178.1,103.2 1179.3,103.9 1180.5,105.0 1181.6,106.4 1182.8,108.1 1183.9,110.0 1185.1,112.1 1186.3,114.4 1187.4,116.8 1188.6,119.4 1189.8,121.9 1190.9,124.5 1192.1,127.0 1193.3,129.5 1194.4,131.9 1195.6,134.2 1196.8,136.3 1197.9,138.3 1199.1,140.2 1200.3,141.9 1201.4,143.4 1202.6,144.8 1203.8,146.1 1204.9,147.1 1206.1,148.1 1207.3,148.9 1208.4,149.6 1209.6,150.2 1210.8,150.7 1211.9,151.2 1213.1,151.5 1214.2,151.8 1215.4,152.1 1216.6,152.3 1217.7,152.4 1218.9,152.5 1220.1,152.6 1221.2,152.7 1222.4,152.8 1223.6,152.8 1224.7,152.9 1225.9,152.9 1227.1,152.9 1228.2,152.9 1229.4,152.9 1230.6,152.9 1231.7,153.0 1232.9,153.0 1234.1,153.0 1235.2,153.0 1236.4,153.0 1237.6,153.0 1238.7,153.0 1239.9,153.0 1241.1,153.0 1242.2,153.0 1243.4,153.0 1244.6,153.0 1245.7,153.0 1246.9,153.0 1248.0,153.0 1249.2,153.0 1250.4,153.0 1251.5,153.0 1252.7,153.0 1253.9,153.0 1255.0,153.0 1256.2,153.0 1257.4,153.0 1258.5,153.0 1259.7,153.0 1260.9,153.0 1262.0,153.0 1263.2,153.0 1264.4,153.0 1265.5,153.0 1266.7,153.0 1267.9,153.0 1269.0,153.0 1270.2,153.0 1271.4,153.0 1272.5,153.0 1273.7,153.0 1274.9,153.0 1276.0,153.0 1277.2,153.0 1278.4,153.0 1279.5,153.0 1280.7,153.0 1281.8,153.0 1283.0,153.0 1284.2,153.0 1285.3,153.0" fill="none" stroke="#3a3a3a" stroke-width="1.5"/></g>
<rect x="1048.3" y="60.4" width="251.3" height="150.6" fill="none" stroke="#000" stroke-width="0.9"/>
<line x1="1063.9" x2="1063.9" y1="211.0" y2="214.6" stroke="#000" stroke-width="0.9"/>
<text x="1063.9" y="224.2" font-family="'DejaVu Sans','Liberation Sans',sans-serif" font-size="9.4" fill="#000" text-anchor="middle" xml:space="preserve" >4860</text>
<line x1="1110.5" x2="1110.5" y1="211.0" y2="214.6" stroke="#000" stroke-width="0.9"/>
<text x="1110.52" y="224.2" font-family="'DejaVu Sans','Liberation Sans',sans-serif" font-size="9.4" fill="#000" text-anchor="middle" xml:space="preserve" >4880</text>
<line x1="1157.1" x2="1157.1" y1="211.0" y2="214.6" stroke="#000" stroke-width="0.9"/>
<text x="1157.14" y="224.2" font-family="'DejaVu Sans','Liberation Sans',sans-serif" font-size="9.4" fill="#000" text-anchor="middle" xml:space="preserve" >4900</text>
<line x1="1203.8" x2="1203.8" y1="211.0" y2="214.6" stroke="#000" stroke-width="0.9"/>
<text x="1203.76" y="224.2" font-family="'DejaVu Sans','Liberation Sans',sans-serif" font-size="9.4" fill="#000" text-anchor="middle" xml:space="preserve" >4920</text>
<line x1="1250.4" x2="1250.4" y1="211.0" y2="214.6" stroke="#000" stroke-width="0.9"/>
<text x="1250.38" y="224.2" font-family="'DejaVu Sans','Liberation Sans',sans-serif" font-size="9.4" fill="#000" text-anchor="middle" xml:space="preserve" >4940</text>
<line x1="1297.0" x2="1297.0" y1="211.0" y2="214.6" stroke="#000" stroke-width="0.9"/>
<text x="1297.0" y="224.2" font-family="'DejaVu Sans','Liberation Sans',sans-serif" font-size="9.4" fill="#000" text-anchor="middle" xml:space="preserve" >4960</text>
<line x1="1044.7" x2="1048.3" y1="185.1" y2="185.1" stroke="#000" stroke-width="0.9"/>
<text x="1042.8" y="188.7" font-family="'DejaVu Sans','Liberation Sans',sans-serif" font-size="9.4" fill="#000" text-anchor="end" xml:space="preserve" >0</text>
<line x1="1044.7" x2="1048.3" y1="155.3" y2="155.3" stroke="#000" stroke-width="0.9"/>
<text x="1042.8" y="158.95" font-family="'DejaVu Sans','Liberation Sans',sans-serif" font-size="9.4" fill="#000" text-anchor="end" xml:space="preserve" >1</text>
<line x1="1044.7" x2="1048.3" y1="125.6" y2="125.6" stroke="#000" stroke-width="0.9"/>
<text x="1042.8" y="129.2" font-family="'DejaVu Sans','Liberation Sans',sans-serif" font-size="9.4" fill="#000" text-anchor="end" xml:space="preserve" >2</text>
<line x1="1044.7" x2="1048.3" y1="95.8" y2="95.8" stroke="#000" stroke-width="0.9"/>
<text x="1042.8" y="99.44999999999999" font-family="'DejaVu Sans','Liberation Sans',sans-serif" font-size="9.4" fill="#000" text-anchor="end" xml:space="preserve" >3</text>
<line x1="1044.7" x2="1048.3" y1="66.1" y2="66.1" stroke="#000" stroke-width="0.9"/>
<text x="1042.8" y="69.69999999999999" font-family="'DejaVu Sans','Liberation Sans',sans-serif" font-size="9.4" fill="#000" text-anchor="end" xml:space="preserve" >4</text>
<text x="1049.6" y="72.6" font-family="'DejaVu Sans','Liberation Sans',sans-serif" font-size="8.7" fill="#000">e<tspan font-size="6.1" dy="-3.6">−17</tspan><tspan dy="3.6">x2</tspan><tspan font-style="italic">Å</tspan></text>
<text transform="translate(159.0,349.7) rotate(90)" x="0" y="0" text-anchor="end" font-family="'DejaVu Sans','Liberation Sans',sans-serif" font-size="10.3" fill="#8b008b" fill-opacity="1" xml:space="preserve">SiIV {</text>
<text transform="translate(183.8,349.7) rotate(90)" x="0" y="0" text-anchor="end" font-family="'DejaVu Sans','Liberation Sans',sans-serif" font-size="10.3" fill="#ffa500" fill-opacity="0.9" xml:space="preserve">Ly<tspan font-style="italic">α</tspan> {</text>
<text transform="translate(212.1,349.7) rotate(90)" x="0" y="0" text-anchor="end" font-family="'DejaVu Sans','Liberation Sans',sans-serif" font-size="10.3" fill="#008000" fill-opacity="1" xml:space="preserve">MgII {</text>
<text transform="translate(228.3,349.7) rotate(90)" x="0" y="0" text-anchor="end" font-family="'DejaVu Sans','Liberation Sans',sans-serif" font-size="10.3" fill="#ffa500" fill-opacity="0.9" xml:space="preserve">NV   {</text>
<text transform="translate(258.6,349.7) rotate(90)" x="0" y="0" text-anchor="end" font-family="'DejaVu Sans','Liberation Sans',sans-serif" font-size="10.3" fill="#0000ff" fill-opacity="1" xml:space="preserve">OII  {</text>
<text transform="translate(269.0,349.7) rotate(90)" x="0" y="0" text-anchor="end" font-family="'DejaVu Sans','Liberation Sans',sans-serif" font-size="10.3" fill="#ffa500" fill-opacity="0.8" xml:space="preserve">SiII {</text>
<text transform="translate(309.1,349.7) rotate(90)" x="0" y="0" text-anchor="end" font-family="'DejaVu Sans','Liberation Sans',sans-serif" font-size="10.3" fill="#8a2be2" fill-opacity="0.85" xml:space="preserve">Ly<tspan font-style="italic">α</tspan> {</text>
<text transform="translate(357.2,349.7) rotate(90)" x="0" y="0" text-anchor="end" font-family="'DejaVu Sans','Liberation Sans',sans-serif" font-size="10.3" fill="#8a2be2" fill-opacity="0.85" xml:space="preserve">NV   {</text>
<text transform="translate(388.6,349.7) rotate(90)" x="0" y="0" text-anchor="end" font-family="'DejaVu Sans','Liberation Sans',sans-serif" font-size="10.3" fill="#800080" fill-opacity="1" xml:space="preserve">CIV  {</text>
<text transform="translate(399.8,349.7) rotate(90)" x="0" y="0" text-anchor="end" font-family="'DejaVu Sans','Liberation Sans',sans-serif" font-size="10.3" fill="#8a2be2" fill-opacity="0.7" xml:space="preserve">SiII {</text>
<text transform="translate(442.8,349.7) rotate(90)" x="0" y="0" text-anchor="end" font-family="'DejaVu Sans','Liberation Sans',sans-serif" font-size="10.3" fill="#ff00ff" fill-opacity="0.9" xml:space="preserve">CII  {</text>
<text transform="translate(503.7,349.7) rotate(90)" x="0" y="0" text-anchor="end" font-family="'DejaVu Sans','Liberation Sans',sans-serif" font-size="10.3" fill="#ff0000" fill-opacity="1" xml:space="preserve">OVI  {</text>
<text transform="translate(526.5,349.7) rotate(90)" x="0" y="0" text-anchor="end" font-family="'DejaVu Sans','Liberation Sans',sans-serif" font-size="10.3" fill="#800080" fill-opacity="1" xml:space="preserve">HeII {</text>
<text transform="translate(623.2,349.7) rotate(90)" x="0" y="0" text-anchor="end" font-family="'DejaVu Sans','Liberation Sans',sans-serif" font-size="10.3" fill="#0000ff" fill-opacity="1" xml:space="preserve">Hγ {</text>
<text transform="translate(650.5,349.7) rotate(90)" x="0" y="0" text-anchor="end" font-family="'DejaVu Sans','Liberation Sans',sans-serif" font-size="10.3" fill="#8a2be2" fill-opacity="0.7" xml:space="preserve">SiIV {</text>
<text transform="translate(757.9,349.7) rotate(90)" x="0" y="0" text-anchor="end" font-family="'DejaVu Sans','Liberation Sans',sans-serif" font-size="10.3" fill="#87ceeb" fill-opacity="0.9" xml:space="preserve">OII  {</text>
<text transform="translate(772.3,349.7) rotate(90)" x="0" y="0" text-anchor="end" font-family="'DejaVu Sans','Liberation Sans',sans-serif" font-size="10.3" fill="#ffa500" fill-opacity="0.9" xml:space="preserve">CIV  {</text>
<text transform="translate(782.2,349.7) rotate(90)" x="0" y="0" text-anchor="end" font-family="'DejaVu Sans','Liberation Sans',sans-serif" font-size="10.3" fill="#87ceeb" fill-opacity="0.9" xml:space="preserve">OII  {</text>
<text transform="translate(992.6,349.7) rotate(90)" x="0" y="0" text-anchor="end" font-family="'DejaVu Sans','Liberation Sans',sans-serif" font-size="10.3" fill="#ff0000" fill-opacity="1" xml:space="preserve">NV   {</text>
<text transform="translate(1019.8,349.7) rotate(90)" x="0" y="0" text-anchor="end" font-family="'DejaVu Sans','Liberation Sans',sans-serif" font-size="10.3" fill="#0000ff" fill-opacity="1" xml:space="preserve">OIII {</text>
<text transform="translate(1046.8,349.7) rotate(90)" x="0" y="0" text-anchor="end" font-family="'DejaVu Sans','Liberation Sans',sans-serif" font-size="10.3" fill="#ff0000" fill-opacity="1" xml:space="preserve">SiII {</text>
<text transform="translate(1103.7,349.7) rotate(90)" x="0" y="0" text-anchor="end" font-family="'DejaVu Sans','Liberation Sans',sans-serif" font-size="10.3" fill="#8a2be2" fill-opacity="0.85" xml:space="preserve">HeII {</text>
<text transform="translate(1204.0,349.7) rotate(90)" x="0" y="0" text-anchor="end" font-family="'DejaVu Sans','Liberation Sans',sans-serif" font-size="10.3" fill="#87ceeb" fill-opacity="0.9" xml:space="preserve">Hγ {</text>
<text transform="translate(1232.3,349.7) rotate(90)" x="0" y="0" text-anchor="end" font-family="'DejaVu Sans','Liberation Sans',sans-serif" font-size="10.3" fill="#87ceeb" fill-opacity="0.9" xml:space="preserve">Hγ {</text>
<text transform="translate(1281.0,349.7) rotate(90)" x="0" y="0" text-anchor="end" font-family="'DejaVu Sans','Liberation Sans',sans-serif" font-size="10.3" fill="#4169e1" fill-opacity="1" xml:space="preserve">Hβ {</text>
<text transform="translate(505.4,306.3) rotate(90)" x="0" y="0" text-anchor="end" font-family="'DejaVu Sans','Liberation Sans',sans-serif" font-size="10.3" fill="#ffa500" fill-opacity="0.85" xml:space="preserve">SiIV {</text>
<text transform="translate(525.0,306.3) rotate(90)" x="0" y="0" text-anchor="end" font-family="'DejaVu Sans','Liberation Sans',sans-serif" font-size="10.3" fill="#4169e1" fill-opacity="1" xml:space="preserve">OII  {</text>
<text transform="translate(991.5,306.3) rotate(90)" x="0" y="0" text-anchor="end" font-family="'DejaVu Sans','Liberation Sans',sans-serif" font-size="10.3" fill="#0000ff" fill-opacity="1" xml:space="preserve">OIII {</text>
<rect x="101.5" y="348.6" width="1198.0" height="83.6" fill="#fff"/>
<clipPath id="cl2"><rect x="101.5" y="348.6" width="1198.0" height="83.6"/></clipPath>
<g clip-path="url(#cl2)"><rect x="908.3" y="348.6" width="54.5" height="83.6" fill="#bfbf00"/><polygon points="100.0,435.0 100.0,371.8 101.8,372.7 103.5,372.3 105.3,372.3 107.1,373.1 108.8,372.2 110.6,372.5 112.4,369.4 114.1,370.0 115.9,371.8 117.7,373.9 119.4,370.2 121.2,373.2 123.0,374.5 124.7,377.9 126.5,374.5 128.3,376.0 130.0,370.9 131.8,374.1 133.6,372.5 135.3,376.1 137.1,369.6 138.9,372.1 140.7,369.7 142.4,372.9 144.2,375.7 146.0,377.2 147.7,380.0 149.5,377.4 151.3,382.9 153.0,383.6 154.8,382.0 156.6,383.5 158.3,383.3 160.1,384.2 161.9,383.7 163.6,385.8 165.4,385.2 167.2,385.0 168.9,384.3 170.7,384.3 172.5,381.4 174.2,384.3 176.0,383.5 177.8,381.3 179.5,380.5 181.3,379.2 183.1,379.4 184.8,378.8 186.6,379.9 188.4,381.4 190.1,385.8 191.9,386.3 193.7,388.6 195.4,384.8 197.2,384.3 199.0,388.7 200.7,388.2 202.5,388.0 204.3,387.7 206.0,387.6 207.8,390.3 209.6,390.0 211.3,390.3 213.1,391.6 214.9,392.7 216.6,392.3 218.4,391.5 220.2,391.6 221.9,391.6 223.7,392.2 225.5,389.8 227.2,389.0 229.0,387.1 230.8,389.1 232.5,392.2 234.3,394.0 236.1,394.5 237.8,392.4 239.6,393.3 241.4,395.1 243.1,392.9 244.9,392.8 246.7,395.1 248.4,394.8 250.2,393.9 252.0,395.0 253.7,395.1 255.5,392.6 257.3,392.7 259.0,396.7 260.8,395.9 262.6,394.8 264.3,394.6 266.1,393.5 267.9,393.8 269.6,394.4 271.4,395.9 273.2,395.0 274.9,396.9 276.7,396.0 278.5,397.3 280.2,395.6 282.0,394.9 283.8,396.5 285.5,395.4 287.3,396.4 289.1,395.8 290.8,395.6 292.6,395.9 294.4,394.5 296.1,395.8 297.9,394.7 299.7,394.8 301.4,395.9 303.2,395.1 305.0,393.5 306.7,395.9 308.5,397.1 310.3,396.6 312.0,400.1 313.8,398.9 315.6,398.5 317.4,399.5 319.1,399.6 320.9,400.1 322.7,401.0 324.4,400.5 326.2,399.7 328.0,398.3 329.7,401.8 331.5,400.7 333.3,400.0 335.0,400.8 336.8,399.4 338.6,400.3 340.3,400.3 342.1,397.3 343.9,395.3 345.6,392.9 347.4,394.5 349.2,394.4 350.9,397.3 352.7,397.9 354.5,399.2 356.2,399.7 358.0,400.6 359.8,399.7 361.5,399.4 363.3,398.6 365.1,399.0 366.8,401.0 368.6,400.1 370.4,400.4 372.1,400.1 373.9,401.2 375.7,399.8 377.4,400.7 379.2,402.3 381.0,402.5 382.7,401.9 384.5,400.9 386.3,401.1 388.0,400.6 389.8,402.3 391.6,401.7 393.3,400.8 395.1,401.4 396.9,401.4 398.6,401.0 400.4,401.6 402.2,401.4 403.9,402.0 405.7,402.4 407.5,401.4 409.2,401.5 411.0,401.2 412.8,401.7 414.5,401.8 416.3,402.7 418.1,400.9 419.8,401.8 421.6,401.3 423.4,402.7 425.1,401.6 426.9,402.1 428.7,402.0 430.4,403.1 432.2,400.6 434.0,402.9 435.7,402.6 437.5,402.5 439.3,401.2 441.0,401.6 442.8,401.4 444.6,402.4 446.3,402.1 448.1,402.7 449.9,402.1 451.6,401.3 453.4,402.0 455.2,401.9 456.9,401.7 458.7,402.3 460.5,402.8 462.2,402.8 464.0,401.3 465.8,401.5 467.5,402.4 469.3,403.3 471.1,402.1 472.8,401.9 474.6,401.1 476.4,402.5 478.1,401.7 479.9,402.9 481.7,402.2 483.4,401.3 485.2,402.2 487.0,401.9 488.8,400.5 490.5,401.9 492.3,402.4 494.1,402.5 495.8,401.9 497.6,402.7 499.4,402.4 501.1,401.9 502.9,402.3 504.7,402.1 506.4,402.4 508.2,403.1 510.0,402.4 511.7,402.1 513.5,403.6 515.3,403.3 517.0,402.0 518.8,403.5 520.6,403.4 522.3,403.6 524.1,403.3 525.9,403.6 527.6,401.7 529.4,405.1 531.2,403.6 532.9,403.8 534.7,403.0 536.5,403.2 538.2,402.7 540.0,403.1 541.8,404.0 543.5,402.7 545.3,403.7 547.1,402.2 548.8,404.1 550.6,402.2 552.4,402.7 554.1,402.5 555.9,402.8 557.7,402.4 559.4,402.4 561.2,402.8 563.0,402.8 564.7,403.0 566.5,403.9 568.3,402.1 570.0,404.1 571.8,403.2 573.6,404.0 575.3,403.0 577.1,402.1 578.9,403.5 580.6,403.1 582.4,403.7 584.2,402.9 585.9,403.3 587.7,403.2 589.5,402.5 591.2,402.4 593.0,403.0 594.8,403.7 596.5,403.1 598.3,403.2 600.1,403.0 601.8,404.0 603.6,402.9 605.4,403.8 607.1,402.9 608.9,403.1 610.7,403.1 612.4,403.2 614.2,402.9 616.0,404.0 617.7,403.8 619.5,404.7 621.3,403.7 623.0,404.0 624.8,403.6 626.6,405.1 628.3,404.7 630.1,404.6 631.9,405.5 633.6,404.3 635.4,403.6 637.2,403.8 638.9,403.8 640.7,404.2 642.5,403.5 644.2,404.5 646.0,404.9 647.8,404.0 649.5,403.9 651.3,404.5 653.1,404.2 654.8,404.7 656.6,404.6 658.4,405.1 660.1,404.0 661.9,404.6 663.7,404.9 665.4,403.9 667.2,404.6 669.0,404.8 670.8,405.2 672.5,404.3 674.3,404.9 676.1,404.6 677.8,404.5 679.6,404.6 681.4,404.3 683.1,404.7 684.9,404.4 686.7,404.9 688.4,405.1 690.2,404.9 692.0,404.4 693.7,405.0 695.5,405.2 697.3,405.6 699.0,405.5 700.8,405.5 702.6,406.5 704.3,405.4 706.1,405.4 707.9,405.2 709.6,405.5 711.4,406.2 713.2,406.0 714.9,406.3 716.7,406.3 718.5,405.4 720.2,406.1 722.0,406.8 723.8,406.9 725.5,406.4 727.3,406.5 729.1,406.4 730.8,406.5 732.6,407.5 734.4,406.7 736.1,407.7 737.9,407.5 739.7,407.9 741.4,407.3 743.2,406.9 745.0,407.8 746.7,407.4 748.5,408.2 750.3,406.9 752.0,406.7 753.8,408.3 755.6,408.3 757.3,408.0 759.1,408.2 760.9,407.6 762.6,406.9 764.4,408.0 766.2,407.6 767.9,408.3 769.7,408.5 771.5,407.6 773.2,407.0 775.0,408.1 776.8,406.9 778.5,407.7 780.3,407.1 782.1,408.0 783.8,408.3 785.6,407.7 787.4,408.2 789.1,407.0 790.9,407.3 792.7,405.9 794.4,407.2 796.2,407.5 798.0,407.3 799.7,407.5 801.5,406.9 803.3,406.9 805.0,408.1 806.8,406.5 808.6,406.9 810.3,406.3 812.1,407.1 813.9,406.8 815.6,407.1 817.4,407.4 819.2,406.1 820.9,406.8 822.7,407.1 824.5,407.3 826.2,407.6 828.0,407.1 829.8,407.5 831.5,407.7 833.3,407.4 835.1,407.6 836.8,406.9 838.6,407.9 840.4,408.3 842.1,407.1 843.9,407.7 845.7,408.1 847.5,407.2 849.2,407.4 851.0,408.7 852.8,407.4 854.5,407.4 856.3,407.2 858.1,407.8 859.8,408.3 861.6,408.1 863.4,407.5 865.1,408.3 866.9,407.7 868.7,408.7 870.4,408.4 872.2,408.1 874.0,408.1 875.7,408.0 877.5,409.1 879.3,407.7 881.0,407.9 882.8,407.8 884.6,408.7 886.3,407.7 888.1,408.4 889.9,408.7 891.6,408.1 893.4,408.8 895.2,408.5 896.9,407.9 898.7,408.2 900.5,408.6 902.2,407.3 904.0,408.3 905.8,408.5 907.5,408.3 909.3,408.2 911.1,408.0 912.8,408.0 914.6,408.0 916.4,408.3 918.1,408.4 919.9,407.8 921.7,408.1 923.4,408.2 925.2,407.7 927.0,408.0 928.7,408.4 930.5,408.2 932.3,407.7 934.0,407.9 935.8,408.1 937.6,407.3 939.3,408.1 941.1,408.2 942.9,408.0 944.6,408.3 946.4,408.5 948.2,407.9 949.9,408.0 951.7,408.2 953.5,408.3 955.2,408.9 957.0,408.0 958.8,409.4 960.5,408.0 962.3,408.6 964.1,408.7 965.8,408.9 967.6,408.3 969.4,407.6 971.1,407.9 972.9,408.7 974.7,408.4 976.4,408.8 978.2,408.2 980.0,408.8 981.7,408.7 983.5,408.0 985.3,408.9 987.0,408.9 988.8,408.2 990.6,409.2 992.3,409.5 994.1,408.7 995.9,408.9 997.6,408.3 999.4,408.2 1001.2,408.6 1002.9,408.0 1004.7,407.9 1006.5,408.7 1008.2,408.9 1010.0,408.3 1011.8,409.2 1013.5,409.1 1015.3,408.4 1017.1,408.0 1018.8,408.7 1020.6,408.2 1022.4,408.3 1024.2,408.9 1025.9,407.5 1027.7,409.0 1029.5,408.4 1031.2,408.5 1033.0,409.3 1034.8,408.0 1036.5,408.3 1038.3,408.0 1040.1,408.8 1041.8,408.7 1043.6,407.6 1045.4,408.1 1047.1,408.4 1048.9,408.4 1050.7,408.0 1052.4,409.3 1054.2,408.0 1056.0,408.1 1057.7,408.4 1059.5,408.6 1061.3,408.4 1063.0,408.2 1064.8,409.1 1066.6,408.9 1068.3,408.1 1070.1,408.7 1071.9,408.5 1073.6,408.6 1075.4,408.5 1077.2,407.9 1078.9,408.1 1080.7,408.5 1082.5,408.9 1084.2,407.7 1086.0,408.5 1087.8,408.3 1089.5,408.4 1091.3,408.2 1093.1,409.0 1094.8,409.3 1096.6,408.3 1098.4,408.1 1100.1,407.6 1101.9,405.8 1103.7,404.8 1105.4,404.2 1107.2,404.7 1109.0,406.8 1110.7,408.5 1112.5,408.3 1114.3,408.4 1116.0,408.2 1117.8,408.8 1119.6,407.7 1121.3,408.3 1123.1,408.0 1124.9,407.6 1126.6,408.6 1128.4,408.3 1130.2,407.9 1131.9,408.6 1133.7,408.4 1135.5,408.3 1137.2,408.6 1139.0,407.5 1140.8,408.5 1142.5,408.6 1144.3,408.6 1146.1,408.8 1147.8,409.1 1149.6,408.1 1151.4,408.5 1153.1,408.0 1154.9,407.6 1156.7,408.7 1158.4,408.0 1160.2,408.9 1162.0,407.5 1163.7,408.4 1165.5,408.2 1167.3,408.6 1169.0,408.5 1170.8,409.2 1172.6,408.8 1174.3,408.4 1176.1,407.9 1177.9,407.6 1179.6,408.8 1181.4,408.2 1183.2,408.4 1184.9,408.0 1186.7,407.5 1188.5,408.0 1190.2,407.3 1192.0,407.3 1193.8,408.7 1195.5,407.0 1197.3,406.9 1199.1,407.4 1200.9,407.6 1202.6,407.8 1204.4,406.4 1206.2,406.6 1207.9,407.0 1209.7,406.6 1211.5,406.1 1213.2,406.4 1215.0,407.8 1216.8,405.9 1218.5,407.0 1220.3,406.7 1222.1,407.4 1223.8,407.6 1225.6,407.3 1227.4,407.3 1229.1,406.9 1230.9,408.1 1232.7,407.1 1234.4,407.2 1236.2,407.5 1238.0,407.6 1239.7,407.1 1241.5,407.3 1243.3,407.4 1245.0,407.8 1246.8,407.4 1248.6,407.7 1250.3,407.9 1252.1,408.0 1253.9,407.6 1255.6,407.7 1257.4,407.8 1259.2,407.3 1260.9,407.6 1262.7,407.0 1264.5,407.2 1266.2,407.6 1268.0,408.1 1269.8,406.9 1271.5,406.7 1273.3,407.0 1275.1,406.9 1276.8,407.8 1278.6,407.0 1280.4,407.7 1282.1,407.1 1283.9,409.0 1285.7,408.2 1287.4,407.8 1289.2,408.1 1291.0,411.2 1292.7,413.5 1294.5,415.5 1296.3,417.8 1297.2,418.9 1292.1,435.0" fill="#808080" fill-opacity="0.5"/><rect x="126.5" y="348.6" width="12.0" height="83.6" fill="#404040" fill-opacity="0.5" stroke="#444" stroke-width="0.8"/><clipPath id="hb126"><rect x="126.5" y="348.6" width="12.0" height="83.6"/></clipPath><path d="M126.5,324.6L138.5,314.0M126.5,347.7L138.5,337.1M126.5,370.8L138.5,360.2M126.5,393.9L138.5,383.3M126.5,417.0L138.5,406.4M126.5,440.1L138.5,429.5M126.5,463.2L138.5,452.6" stroke="#1a1a1a" stroke-width="1.0" fill="none" clip-path="url(#hb126)"/><rect x="1258.7" y="348.6" width="6.8" height="83.6" fill="#404040" fill-opacity="0.5" stroke="#444" stroke-width="0.8"/><clipPath id="hb1258"><rect x="1258.7" y="348.6" width="6.8" height="83.6"/></clipPath><path d="M1258.7,313.3L1265.5,307.0M1258.7,336.4L1265.5,330.1M1258.7,359.5L1265.5,353.2M1258.7,382.6L1265.5,376.3M1258.7,405.7L1265.5,399.4M1258.7,428.8L1265.5,422.5M1258.7,451.9L1265.5,445.6" stroke="#1a1a1a" stroke-width="1.0" fill="none" clip-path="url(#hb1258)"/><line x1="101.5" x2="1299.5" y1="421.2" y2="421.2" stroke="#555" stroke-width="1.0"/><line x1="935.3" x2="935.3" y1="348.6" y2="432.2" stroke="#000" stroke-width="0.9" stroke-dasharray="2.6,1.6"/><polyline points="102.1,402.3 102.5,404.0 103.0,408.5 103.4,414.5 103.8,419.9 104.3,423.1 104.7,421.9 105.2,411.4 105.6,394.0 106.0,375.4 106.5,361.6 106.9,356.9 107.4,364.9 107.8,384.0 108.3,407.5 108.7,427.2 109.1,436.0 109.6,431.2 110.0,415.1 110.5,392.9 110.9,371.6 111.3,358.1 111.8,357.4 112.2,373.0 112.7,393.4 113.1,401.7 113.6,402.2 114.0,402.8 114.4,405.3 114.9,413.7 115.3,416.7 115.8,417.6 116.2,419.5 116.6,421.5 117.1,422.7 117.5,423.2 118.0,425.7 118.4,429.8 118.9,433.8 119.3,436.0 119.7,434.8 120.2,429.2 120.6,423.7 121.1,422.7 121.5,427.5 122.0,434.2 122.4,437.3 122.8,434.9 123.3,428.3 123.7,418.3 124.2,406.6 124.6,394.8 125.0,384.8 125.5,378.2 125.9,375.9 126.4,377.1 126.8,380.5 127.3,385.3 127.7,390.5 128.1,395.0 128.6,397.7 129.0,398.3 129.5,398.6 129.9,399.2 130.3,399.4 130.8,401.6 131.2,407.2 131.7,413.8 132.1,418.5 132.6,419.2 133.0,415.5 133.4,410.4 133.9,408.0 134.3,413.8 134.8,426.4 135.2,435.4 135.6,433.8 136.1,423.7 136.5,412.4 137.0,408.0 137.4,409.7 137.9,413.4 138.3,417.3 138.7,419.3 139.2,417.9 139.6,412.8 140.1,406.1 140.5,400.4 140.9,398.2 141.4,398.7 141.8,399.7 142.3,400.5 142.7,402.4 143.2,410.9 143.6,423.0 144.0,433.3 144.5,437.3 144.9,435.6 145.4,430.7 145.8,423.3 146.2,414.6 146.7,405.8 147.1,398.2 147.6,393.0 148.0,390.8 148.5,392.4 148.9,398.1 149.3,406.7 149.8,416.7 150.2,426.2 150.7,433.4 151.1,437.0 151.5,434.0 152.0,419.4 152.4,401.1 152.9,389.9 153.3,389.5 153.8,391.4 154.2,394.2 154.6,396.8 155.1,398.2 155.5,397.7 156.0,395.2 156.4,391.9 156.8,388.9 157.3,387.4 157.7,388.3 158.2,392.0 158.6,397.2 159.1,402.3 159.5,405.6 159.9,405.2 160.4,392.0 160.8,380.3 161.3,383.7 161.7,397.6 162.1,416.0 162.6,431.3 163.0,437.3 163.5,435.0 163.9,428.5 164.4,419.4 164.8,409.5 165.2,401.0 165.7,395.8 166.1,395.1 166.6,400.1 167.0,409.1 167.5,418.3 167.9,424.0 168.3,423.9 168.8,419.5 169.2,414.9 169.7,413.6 170.1,411.1 170.5,406.0 171.0,399.1 171.4,391.4 171.9,384.0 172.3,378.2 172.8,374.8 173.2,374.4 173.6,378.2 174.1,385.7 174.5,395.4 175.0,405.0 175.4,412.6 175.8,416.3 176.3,417.6 176.7,422.2 177.2,428.7 177.6,434.6 178.1,437.2 178.5,436.3 178.9,432.8 179.4,427.3 179.8,420.7 180.3,413.9 180.7,408.1 181.1,404.0 181.6,402.3 182.0,403.9 182.5,409.3 182.9,416.3 183.4,422.2 183.8,424.6 184.2,425.3 184.7,427.4 185.1,430.3 185.6,433.4 186.0,435.9 186.4,437.2 186.9,436.9 187.3,434.9 187.8,431.7 188.2,428.0 188.7,424.5 189.1,422.1 189.5,421.2 190.0,422.9 190.4,427.2 190.9,432.3 191.3,436.2 191.7,437.2 192.2,435.0 192.6,430.1 193.1,423.0 193.5,414.9 194.0,407.0 194.4,400.4 194.8,396.2 195.3,394.8 195.7,397.5 196.2,404.4 196.6,414.0 197.0,424.0 197.5,432.2 197.9,436.7 198.4,436.3 198.8,429.7 199.3,418.2 199.7,404.6 200.1,392.0 200.6,383.5 201.0,381.1 201.5,383.7 201.9,389.6 202.3,396.1 202.8,400.7 203.2,401.5 203.7,398.7 204.1,393.2 204.6,386.2 205.0,379.2 205.4,373.6 205.9,370.9 206.3,376.2 206.8,395.1 207.2,400.8 207.6,386.7 208.1,376.4 208.5,379.2 209.0,386.7 209.4,397.5 209.9,408.9 210.3,418.4 210.7,423.9 211.2,425.1 211.6,429.0 212.1,433.9 212.5,436.1 213.0,435.8 213.4,434.9 213.8,433.4 214.3,431.7 214.7,429.7 215.2,427.9 215.6,426.3 216.0,425.2 216.5,424.7 216.9,424.3 217.4,422.3 217.8,418.8 218.3,414.2 218.7,408.9 219.1,403.4 219.6,398.4 220.0,394.3 220.5,391.4 220.9,390.2 221.3,392.2 221.8,399.5 222.2,410.5 222.7,422.4 223.1,432.0 223.6,436.9 224.0,436.9 224.4,435.0 224.9,431.8 225.3,427.4 225.8,422.4 226.2,417.2 226.6,412.3 227.1,408.3 227.5,405.4 228.0,404.1 228.4,405.6 228.9,413.4 229.3,424.3 229.7,433.6 230.2,437.3 230.6,436.3 231.1,433.6 231.5,429.4 231.9,424.1 232.4,418.2 232.8,412.4 233.3,407.2 233.7,403.2 234.2,400.7 234.6,400.0 235.0,402.0 235.5,406.6 235.9,412.7 236.4,418.7 236.8,423.1 237.2,424.6 237.7,423.4 238.1,419.8 238.6,414.4 239.0,407.8 239.5,401.0 239.9,394.9 240.3,390.2 240.8,387.7 241.2,387.9 241.7,393.0 242.1,401.1 242.5,409.0 243.0,413.4 243.4,412.9 243.9,408.7 244.3,401.8 244.8,393.8 245.2,386.4 245.6,381.2 246.1,379.3 246.5,382.7 247.0,391.6 247.4,401.9 247.8,409.3 248.3,410.1 248.7,400.6 249.2,387.2 249.6,381.0 250.1,384.4 250.5,393.1 250.9,403.6 251.4,411.5 251.8,413.6 252.3,408.7 252.7,399.5 253.2,391.0 253.6,387.9 254.0,389.2 254.5,392.6 254.9,397.8 255.4,404.3 255.8,411.6 256.2,419.0 256.7,425.8 257.1,431.4 257.6,435.3 258.0,437.1 258.5,436.5 258.9,432.9 259.3,427.1 259.8,420.4 260.2,414.4 260.7,410.6 261.1,409.9 261.5,412.4 262.0,416.5 262.4,419.3 262.9,418.5 263.3,413.8 263.8,407.4 264.2,402.2 264.6,400.6 265.1,403.0 265.5,408.4 266.0,414.4 266.4,418.6 266.8,419.3 267.3,416.6 267.7,411.6 268.2,406.4 268.6,402.9 269.1,402.5 269.5,404.8 269.9,409.2 270.4,414.5 270.8,419.7 271.3,423.3 271.7,424.6 272.1,424.2 272.6,423.0 273.0,421.0 273.5,418.6 273.9,416.0 274.4,413.3 274.8,411.0 275.2,409.3 275.7,408.2 276.1,407.9 276.6,405.6 277.0,400.9 277.4,394.4 277.9,387.3 278.3,380.9 278.8,376.2 279.2,374.2 279.7,376.8 280.1,386.5 280.5,400.4 281.0,413.9 281.4,422.8 281.9,424.2 282.3,417.5 282.7,405.7 283.2,393.9 283.6,387.2 284.1,388.0 284.5,393.6 285.0,400.5 285.4,404.8 285.8,404.2 286.3,399.8 286.7,394.4 287.2,391.0 287.6,391.7 288.0,396.2 288.5,403.7 288.9,412.4 289.4,420.4 289.8,426.1 290.3,428.1 290.7,424.9 291.1,416.7 291.6,406.7 292.0,398.7 292.5,395.9 292.9,396.2 293.3,397.0 293.8,398.1 294.2,399.4 294.7,400.7 295.1,401.8 295.6,402.5 296.0,402.8 296.4,405.3 296.9,411.9 297.3,419.0 297.8,422.8 298.2,422.4 298.7,420.3 299.1,417.1 299.5,413.5 300.0,410.3 300.4,408.3 300.9,407.8 301.3,406.7 301.7,404.6 302.2,402.8 302.6,402.1 303.1,394.0 303.5,386.0 304.0,389.0 304.4,396.0 304.8,397.6 305.3,393.0 305.7,384.0 306.2,372.8 306.6,362.1 307.0,354.7 307.5,352.2 307.9,361.6 308.4,375.2 308.8,377.5 309.3,378.5 309.7,379.6 310.1,384.6 310.6,392.6 311.0,401.7 311.5,409.6 311.9,414.3 312.3,414.9 312.8,412.3 313.2,407.6 313.7,402.3 314.1,398.2 314.6,396.5 315.0,398.6 315.4,402.7 315.9,403.6 316.3,403.3 316.8,403.0 317.2,403.4 317.6,405.1 318.1,407.6 318.5,410.1 319.0,411.8 319.4,412.4 319.9,416.3 320.3,423.6 320.7,431.3 321.2,436.3 321.6,434.3 322.1,413.7 322.5,390.0 322.9,383.7 323.4,391.6 323.8,406.8 324.3,423.3 324.7,434.7 325.2,436.9 325.6,434.8 326.0,430.6 326.5,425.4 326.9,420.3 327.4,416.6 327.8,415.1 328.2,414.5 328.7,413.0 329.1,411.2 329.6,410.1 330.0,410.6 330.5,413.2 330.9,416.9 331.3,419.8 331.8,420.7 332.2,419.8 332.7,417.5 333.1,414.1 333.5,410.2 334.0,406.2 334.4,402.7 334.9,400.2 335.3,399.1 335.8,399.5 336.2,401.7 336.6,405.2 337.1,409.3 337.5,413.2 338.0,416.3 338.4,417.8 338.8,417.7 339.3,416.8 339.7,416.0 340.2,416.2 340.6,421.4 341.1,429.8 341.5,436.1 341.9,436.6 342.4,432.8 342.8,426.5 343.3,420.1 343.7,415.9 344.2,415.6 344.6,420.0 345.0,422.2 345.5,421.0 345.9,418.3 346.4,415.2 346.8,412.9 347.2,412.2 347.7,411.8 348.1,410.9 348.6,409.5 349.0,408.0 349.5,406.5 349.9,405.3 350.3,404.5 350.8,404.4 351.2,405.4 351.7,407.2 352.1,408.9 352.5,409.3 353.0,408.0 353.4,406.0 353.9,405.0 354.3,406.1 354.8,408.6 355.2,410.5 355.6,410.5 356.1,408.7 356.5,406.2 357.0,404.5 357.4,405.3 357.8,411.9 358.3,422.1 358.7,431.7 359.2,436.8 359.6,436.2 360.1,432.8 360.5,428.0 360.9,424.0 361.4,422.2 361.8,421.2 362.3,418.2 362.7,414.2 363.1,410.2 363.6,407.7 364.0,407.3 364.5,408.9 364.9,411.5 365.4,413.7 365.8,414.3 366.2,414.6 366.7,415.3 367.1,415.9 367.6,416.4 368.0,416.4 368.4,415.8 368.9,414.8 369.3,413.7 369.8,413.0 370.2,413.1 370.7,414.3 371.1,416.3 371.5,418.2 372.0,419.3 372.4,419.2 372.9,418.5 373.3,417.4 373.7,416.4 374.2,415.8 374.6,416.2 375.1,418.0 375.5,421.0 376.0,424.7 376.4,428.6 376.8,432.0 377.3,434.5 377.7,435.6 378.2,435.1 378.6,432.8 379.0,429.5 379.5,426.6 379.9,425.1 380.4,423.2 380.8,417.4 381.3,412.7 381.7,412.5 382.1,413.7 382.6,414.9 383.0,414.8 383.5,411.7 383.9,406.2 384.3,400.6 384.8,397.0 385.2,396.5 385.7,396.1 386.1,395.4 386.6,394.7 387.0,394.4 387.4,395.4 387.9,400.3 388.3,407.3 388.8,413.6 389.2,416.5 389.7,419.7 390.1,428.7 390.5,436.1 391.0,435.5 391.4,425.4 391.9,411.1 392.3,400.5 392.7,398.8 393.2,400.9 393.6,404.0 394.1,406.2 394.5,406.4 395.0,405.6 395.4,405.0 395.8,407.1 396.3,413.5 396.7,420.1 397.2,422.9 397.6,423.7 398.0,425.5 398.5,427.3 398.9,427.8 399.4,424.3 399.8,418.3 400.3,415.1 400.7,421.7 401.1,434.1 401.6,436.8 402.0,434.5 402.5,430.1 402.9,424.6 403.3,419.3 403.8,415.3 404.2,413.6 404.7,413.4 405.1,412.8 405.6,412.3 406.0,411.5 406.4,408.0 406.9,402.3 407.3,395.6 407.8,389.6 408.2,385.5 408.6,384.4 409.1,386.4 409.5,391.3 410.0,398.4 410.4,406.5 410.9,414.5 411.3,421.1 411.7,425.3 412.2,426.4 412.6,421.8 413.1,411.3 413.5,398.1 413.9,386.3 414.4,379.4 414.8,379.4 415.3,384.7 415.7,393.5 416.2,403.4 416.6,411.3 417.0,415.0 417.5,414.9 417.9,414.3 418.4,413.7 418.8,414.0 419.2,416.3 419.7,417.9 420.1,414.7 420.6,405.8 421.0,395.2 421.5,387.9 421.9,386.9 422.3,390.7 422.8,397.8 423.2,406.1 423.7,413.3 424.1,417.4 424.5,417.3 425.0,414.2 425.4,410.9 425.9,410.4 426.3,414.4 426.8,420.9 427.2,425.7 427.6,425.7 428.1,420.3 428.5,416.5 429.0,417.6 429.4,420.8 429.9,424.8 430.3,428.1 430.7,429.4 431.2,428.3 431.6,425.6 432.1,422.4 432.5,420.0 432.9,419.4 433.4,419.1 433.8,418.6 434.3,417.9 434.7,417.1 435.2,416.3 435.6,415.7 436.0,415.3 436.5,415.1 436.9,414.5 437.4,412.9 437.8,410.8 438.2,408.5 438.7,406.8 439.1,405.9 439.6,406.0 440.0,406.9 440.5,407.7 440.9,408.1 441.3,409.9 441.8,412.9 442.2,415.8 442.7,417.7 443.1,417.5 443.5,415.3 444.0,411.5 444.4,407.3 444.9,403.9 445.3,402.3 445.8,402.9 446.2,405.3 446.6,407.9 447.1,409.3 447.5,408.6 448.0,406.2 448.4,403.5 448.8,402.3 449.3,403.6 449.7,407.9 450.2,414.3 450.6,421.6 451.1,428.6 451.5,434.0 451.9,436.8 452.4,437.0 452.8,436.8 453.3,436.6 453.7,436.2 454.1,435.9 454.6,435.7 455.0,435.7 455.5,433.8 455.9,429.3 456.4,424.1 456.8,420.3 457.2,419.5 457.7,421.3 458.1,424.3 458.6,426.7 459.0,426.7 459.4,422.3 459.9,415.2 460.3,409.2 460.8,407.2 461.2,408.6 461.7,411.8 462.1,416.2 462.5,420.7 463.0,424.4 463.4,426.3 463.9,425.8 464.3,421.8 464.7,415.1 465.2,407.3 465.6,400.2 466.1,395.6 466.5,394.6 467.0,403.2 467.4,416.6 467.8,422.9 468.3,419.1 468.7,409.3 469.2,397.2 469.6,387.7 470.0,384.4 470.5,385.4 470.9,388.0 471.4,391.0 471.8,393.1 472.3,393.6 472.7,392.2 473.1,390.9 473.6,391.9 474.0,396.7 474.5,403.8 474.9,411.1 475.4,416.3 475.8,417.9 476.2,416.7 476.7,414.7 477.1,413.6 477.6,414.8 478.0,418.5 478.4,423.8 478.9,429.5 479.3,434.1 479.8,436.7 480.2,436.4 480.7,432.4 481.1,426.0 481.5,419.8 482.0,416.1 482.4,416.6 482.9,420.5 483.3,424.3 483.7,424.7 484.2,420.5 484.6,415.3 485.1,413.6 485.5,412.6 486.0,410.3 486.4,407.4 486.8,404.4 487.3,402.0 487.7,400.8 488.2,401.4 488.6,404.2 489.0,408.3 489.5,411.9 489.9,413.6 490.4,413.4 490.8,412.6 491.3,411.6 491.7,410.6 492.1,410.1 492.6,410.8 493.0,414.1 493.5,418.5 493.9,421.6 494.3,422.1 494.8,421.1 495.2,419.8 495.7,419.4 496.1,421.3 496.6,424.9 497.0,428.1 497.4,429.3 497.9,427.9 498.3,424.2 498.8,419.5 499.2,415.2 499.6,412.6 500.1,412.1 500.5,411.2 501.0,409.5 501.4,407.4 501.9,405.4 502.3,404.1 502.7,403.6 503.2,404.6 503.6,407.0 504.1,409.8 504.5,411.8 504.9,412.2 505.4,411.3 505.8,410.0 506.3,409.4 506.7,412.5 507.2,419.8 507.6,424.8 508.0,424.5 508.5,421.8 508.9,418.1 509.4,415.0 509.8,413.6 510.2,413.0 510.7,411.4 511.1,410.2 511.6,410.4 512.0,412.4 512.5,415.3 512.9,418.0 513.3,419.3 513.8,418.5 514.2,415.2 514.7,410.4 515.1,405.4 515.5,401.6 516.0,400.1 516.4,401.7 516.9,406.2 517.3,410.6 517.8,412.2 518.2,410.8 518.6,407.9 519.1,405.1 519.5,404.4 520.0,407.4 520.4,414.0 520.9,422.2 521.3,429.8 521.7,434.7 522.2,435.2 522.6,428.9 523.1,418.8 523.5,411.2 523.9,410.4 524.4,413.1 524.8,417.0 525.3,420.1 525.7,420.6 526.2,418.7 526.6,415.2 527.0,411.6 527.5,409.1 527.9,408.7 528.4,408.4 528.8,408.0 529.2,407.5 529.7,407.0 530.1,406.6 530.6,406.5 531.0,407.9 531.5,410.3 531.9,410.5 532.3,408.2 532.8,405.0 533.2,402.6 533.7,402.6 534.1,405.1 534.5,409.3 535.0,413.4 535.4,415.6 535.9,415.9 536.3,416.2 536.8,416.4 537.2,415.7 537.6,410.0 538.1,403.3 538.5,402.0 539.0,410.4 539.4,416.5 539.8,414.9 540.3,410.7 540.7,405.4 541.2,400.8 541.6,398.6 542.1,398.7 542.5,399.1 542.9,399.4 543.4,402.9 543.8,416.5 544.3,420.8 544.7,422.2 545.1,424.2 545.6,425.1 546.0,407.9 546.5,384.4 546.9,388.6 547.4,405.6 547.8,412.1 548.2,407.7 548.7,402.7 549.1,403.5 549.6,407.6 550.0,408.3 550.4,404.1 550.9,398.7 551.3,396.6 551.8,404.6 552.2,416.1 552.7,416.8 553.1,409.4 553.5,397.3 554.0,384.4 554.4,374.7 554.9,371.5 555.3,375.8 555.7,385.9 556.2,398.0 556.6,407.2 557.1,410.0 557.5,402.9 558.0,390.8 558.4,384.4 558.8,387.4 559.3,396.1 559.7,406.8 560.2,415.2 560.6,417.8 561.0,415.5 561.5,410.2 561.9,403.5 562.4,397.5 562.8,394.1 563.3,394.1 563.7,397.2 564.1,402.4 564.6,408.2 565.0,412.9 565.5,415.1 565.9,414.8 566.4,413.5 566.8,411.5 567.2,409.3 567.7,407.3 568.1,406.1 568.6,405.9 569.0,408.6 569.4,413.2 569.9,417.3 570.3,418.5 570.8,409.4 571.2,393.2 571.7,383.3 572.1,383.1 572.5,383.6 573.0,384.1 573.4,384.3 573.9,390.2 574.3,405.8 574.7,421.3 575.2,427.2 575.6,423.6 576.1,415.2 576.5,405.4 577.0,398.2 577.4,396.7 577.8,399.7 578.3,405.2 578.7,410.2 579.2,412.2 579.6,409.8 580.0,405.8 580.5,405.8 580.9,411.6 581.4,419.8 581.8,425.2 582.3,425.0 582.7,420.4 583.1,413.4 583.6,406.8 584.0,403.2 584.5,403.6 584.9,406.7 585.3,410.6 585.8,413.3 586.2,411.9 586.7,403.8 587.1,400.9 587.6,404.1 588.0,410.2 588.4,416.6 588.9,420.8 589.3,421.1 589.8,418.4 590.2,414.0 590.6,409.5 591.1,406.8 591.5,406.3 592.0,405.1 592.4,403.0 592.9,400.8 593.3,399.1 593.7,398.6 594.2,399.8 594.6,402.9 595.1,407.4 595.5,412.5 595.9,417.2 596.4,420.9 596.8,422.8 597.3,421.6 597.7,414.3 598.2,404.5 598.6,397.6 599.0,397.1 599.5,401.9 599.9,408.7 600.4,413.2 600.8,413.2 601.2,410.7 601.7,406.5 602.1,401.6 602.6,397.1 603.0,394.0 603.5,393.0 603.9,395.6 604.3,401.6 604.8,408.7 605.2,413.9 605.7,415.1 606.1,414.2 606.5,413.6 607.0,418.2 607.4,428.0 607.9,435.1 608.3,435.0 608.8,431.9 609.2,426.7 609.6,420.3 610.1,414.0 610.5,408.8 611.0,405.6 611.4,405.3 611.9,409.4 612.3,416.8 612.7,424.6 613.2,429.8 613.6,430.6 614.1,428.9 614.5,425.6 614.9,421.2 615.4,416.3 615.8,411.8 616.3,408.2 616.7,406.2 617.2,406.1 617.6,408.7 618.0,412.2 618.5,413.6 618.9,413.9 619.4,414.4 619.8,414.9 620.2,415.1 620.7,414.2 621.1,411.5 621.6,408.4 622.0,406.2 622.5,406.0 622.9,408.1 623.3,411.8 623.8,415.7 624.2,418.6 624.7,419.2 625.1,414.7 625.5,405.4 626.0,395.3 626.4,388.4 626.9,387.5 627.3,390.9 627.8,396.9 628.2,403.9 628.6,409.5 629.1,412.2 629.5,411.8 630.0,410.3 630.4,408.2 630.8,406.5 631.3,405.8 631.7,409.5 632.2,418.2 632.6,426.6 633.1,429.0 633.5,412.5 633.9,401.5 634.4,404.2 634.8,410.2 635.3,417.7 635.7,424.2 636.1,427.6 636.6,427.0 637.0,423.3 637.5,419.9 637.9,419.4 638.4,419.7 638.8,420.0 639.2,419.8 639.7,415.7 640.1,408.8 640.6,403.3 641.0,402.7 641.4,406.8 641.9,414.2 642.3,422.1 642.8,427.8 643.2,429.3 643.7,425.9 644.1,418.8 644.5,410.1 645.0,402.5 645.4,398.3 645.9,399.6 646.3,408.3 646.7,416.9 647.2,418.2 647.6,413.5 648.1,407.7 648.5,405.8 649.0,406.8 649.4,408.9 649.8,411.7 650.3,414.5 650.7,416.7 651.2,417.8 651.6,417.5 652.1,415.7 652.5,412.7 652.9,408.9 653.4,404.9 653.8,401.2 654.3,398.6 654.7,397.3 655.1,398.4 655.6,403.7 656.0,410.0 656.5,413.5 656.9,412.9 657.4,410.2 657.8,406.3 658.2,402.2 658.7,399.1 659.1,397.9 659.6,398.3 660.0,399.3 660.4,400.0 660.9,401.9 661.3,409.0 661.8,417.2 662.2,421.4 662.7,415.5 663.1,401.7 663.5,396.5 664.0,397.2 664.4,398.8 664.9,400.8 665.3,402.8 665.7,404.3 666.2,405.0 666.6,403.7 667.1,399.3 667.5,394.5 668.0,392.3 668.4,396.9 668.8,406.4 669.3,409.3 669.7,408.5 670.2,406.7 670.6,404.2 671.0,401.5 671.5,398.8 671.9,396.6 672.4,395.3 672.8,395.0 673.3,395.5 673.7,396.2 674.1,396.5 674.6,397.5 675.0,400.7 675.5,405.2 675.9,410.0 676.3,414.0 676.8,416.2 677.2,416.0 677.7,412.7 678.1,407.6 678.6,402.7 679.0,400.2 679.4,400.5 679.9,402.5 680.3,405.7 680.8,409.3 681.2,412.5 681.6,414.6 682.1,415.0 682.5,411.5 683.0,405.1 683.4,399.8 683.9,398.8 684.3,401.7 684.7,407.1 685.2,413.4 685.6,418.5 686.1,420.7 686.5,421.0 686.9,421.6 687.4,422.2 687.8,420.5 688.3,410.2 688.7,399.2 689.2,396.6 689.6,398.0 690.0,400.6 690.5,403.2 690.9,404.8 691.4,403.9 691.8,397.3 692.2,390.3 692.7,389.4 693.1,399.9 693.6,414.7 694.0,421.4 694.5,420.5 694.9,418.0 695.3,414.4 695.8,410.6 696.2,407.6 696.7,406.0 697.1,407.0 697.6,413.4 698.0,421.5 698.4,426.2 698.9,425.8 699.3,422.8 699.8,417.8 700.2,411.8 700.6,405.9 701.1,400.9 701.5,397.9 702.0,397.3 702.4,398.2 702.9,399.5 703.3,400.1 703.7,399.2 704.2,397.3 704.6,395.4 705.1,394.4 705.5,394.0 705.9,393.1 706.4,392.0 706.8,391.5 707.3,392.4 707.7,395.2 708.2,398.7 708.6,401.4 709.0,402.3 709.5,402.8 709.9,403.7 710.4,404.3 710.8,403.1 711.2,399.2 711.7,396.2 712.1,396.3 712.6,398.8 713.0,402.6 713.5,406.1 713.9,407.8 714.3,410.2 714.8,417.6 715.2,424.0 715.7,424.7 716.1,421.6 716.5,415.8 717.0,408.4 717.4,401.0 717.9,394.9 718.3,391.4 718.8,391.0 719.2,393.7 719.6,398.3 720.1,403.3 720.5,406.9 721.0,407.6 721.4,400.1 721.8,388.2 722.3,382.5 722.7,386.5 723.2,395.9 723.6,404.9 724.1,407.9 724.5,408.7 724.9,410.0 725.4,410.8 725.8,411.5 726.3,413.5 726.7,415.0 727.1,412.5 727.6,401.0 728.0,395.0 728.5,398.1 728.9,404.6 729.4,410.5 729.8,412.3 730.2,413.8 730.7,416.9 731.1,420.3 731.6,422.5 732.0,418.8 732.4,388.4 732.9,381.5 733.3,400.6 733.8,421.5 734.2,424.7 734.7,421.3 735.1,415.8 735.5,410.4 736.0,407.4 736.4,408.0 736.9,411.4 737.3,414.6 737.7,414.8 738.2,412.2 738.6,409.0 739.1,407.9 739.5,410.8 740.0,413.6 740.4,412.5 740.8,409.6 741.3,407.4 741.7,405.9 742.2,400.2 742.6,392.8 743.1,387.8 743.5,387.5 743.9,389.6 744.4,392.8 744.8,395.9 745.3,397.7 745.7,398.7 746.1,403.3 746.6,410.0 747.0,416.2 747.5,419.3 747.9,416.2 748.4,405.6 748.8,394.0 749.2,388.6 749.7,391.6 750.1,399.9 750.6,409.2 751.0,414.7 751.4,412.8 751.9,402.9 752.3,393.8 752.8,392.9 753.2,397.2 753.7,402.2 754.1,403.6 754.5,403.4 755.0,403.1 755.4,402.9 755.9,404.1 756.3,407.4 756.7,411.6 757.2,414.8 757.6,415.8 758.1,415.3 758.5,414.3 759.0,413.2 759.4,412.4 759.8,412.1 760.3,410.4 760.7,407.1 761.2,403.1 761.6,399.6 762.0,397.5 762.5,397.4 762.9,399.4 763.4,403.0 763.8,407.6 764.3,412.3 764.7,416.1 765.1,418.3 765.6,418.6 766.0,417.4 766.5,415.3 766.9,412.6 767.3,410.0 767.8,408.0 768.2,407.2 768.7,409.0 769.1,414.3 769.6,419.9 770.0,422.2 770.4,420.8 770.9,417.4 771.3,413.6 771.8,411.5 772.2,410.5 772.6,406.7 773.1,401.5 773.5,396.9 774.0,395.0 774.4,396.1 774.9,399.0 775.3,402.7 775.7,405.6 776.2,406.5 776.6,406.2 777.1,405.8 777.5,406.1 777.9,407.2 778.4,408.8 778.8,410.7 779.3,412.6 779.7,414.1 780.2,415.0 780.6,415.0 781.0,414.0 781.5,412.2 781.9,410.1 782.4,408.5 782.8,407.9 783.2,407.7 783.7,407.3 784.1,406.8 784.6,406.5 785.0,407.3 785.5,411.3 785.9,416.9 786.3,422.0 786.8,424.3 787.2,423.3 787.7,420.3 788.1,416.3 788.6,412.9 789.0,411.4 789.4,412.2 789.9,414.2 790.3,416.8 790.8,418.7 791.2,419.4 791.6,418.7 792.1,417.1 792.5,414.7 793.0,412.0 793.4,409.3 793.9,407.0 794.3,405.5 794.7,405.0 795.2,404.7 795.6,404.1 796.1,403.6 796.5,402.5 796.9,399.2 797.4,396.5 797.8,396.6 798.3,399.2 798.7,402.6 799.2,405.2 799.6,405.7 800.0,404.8 800.5,403.4 800.9,403.0 801.4,403.7 801.8,405.3 802.2,407.6 802.7,410.1 803.1,412.3 803.6,413.8 804.0,414.3 804.5,413.5 804.9,411.9 805.3,410.8 805.8,411.4 806.2,413.7 806.7,416.5 807.1,417.8 807.5,416.9 808.0,414.0 808.4,410.7 808.9,408.8 809.3,408.9 809.8,409.8 810.2,411.2 810.6,412.5 811.1,413.4 811.5,413.6 812.0,412.7 812.4,410.9 812.8,408.4 813.3,405.4 813.7,402.5 814.2,400.1 814.6,398.4 815.1,397.7 815.5,398.2 815.9,400.1 816.4,403.0 816.8,406.7 817.3,410.7 817.7,414.5 818.1,417.5 818.6,419.4 819.0,420.0 819.5,419.1 819.9,416.9 820.4,413.7 820.8,410.5 821.2,407.9 821.7,406.6 822.1,406.4 822.6,406.2 823.0,405.9 823.4,405.9 823.9,407.3 824.3,409.7 824.8,411.7 825.2,412.2 825.7,410.9 826.1,408.0 826.5,404.5 827.0,401.6 827.4,400.1 827.9,400.2 828.3,400.4 828.8,400.7 829.2,400.7 829.6,399.7 830.1,397.8 830.5,395.5 831.0,393.3 831.4,391.7 831.8,391.1 832.3,391.4 832.7,391.9 833.2,392.2 833.6,393.5 834.1,399.7 834.5,409.1 834.9,418.6 835.4,425.4 835.8,427.0 836.3,420.9 836.7,409.5 837.1,398.9 837.6,395.1 838.0,403.2 838.5,419.0 838.9,429.5 839.4,423.8 839.8,405.2 840.2,397.9 840.7,399.2 841.1,402.0 841.6,405.8 842.0,409.9 842.4,413.5 842.9,415.8 843.3,416.5 843.8,415.0 844.2,411.7 844.7,407.9 845.1,405.1 845.5,404.3 846.0,401.8 846.4,397.2 846.9,393.0 847.3,391.5 847.7,394.1 848.2,400.6 848.6,408.9 849.1,416.3 849.5,420.4 850.0,420.1 850.4,416.8 850.8,413.2 851.3,412.0 851.7,407.7 852.2,400.1 852.6,393.3 853.0,391.1 853.5,392.8 853.9,395.9 854.4,398.7 854.8,399.1 855.3,396.2 855.7,396.4 856.1,399.2 856.6,403.7 857.0,409.0 857.5,413.7 857.9,416.9 858.3,417.8 858.8,416.1 859.2,412.3 859.7,408.0 860.1,405.0 860.6,404.2 861.0,402.7 861.4,400.0 861.9,397.1 862.3,395.1 862.8,394.9 863.2,396.0 863.6,397.8 864.1,399.6 864.5,400.7 865.0,401.4 865.4,405.0 865.9,410.4 866.3,415.4 866.7,417.8 867.2,417.3 867.6,415.2 868.1,412.3 868.5,409.8 868.9,408.7 869.4,407.9 869.8,405.3 870.3,402.5 870.7,400.8 871.2,401.1 871.6,402.5 872.0,404.8 872.5,407.6 872.9,410.2 873.4,412.4 873.8,413.5 874.3,413.5 874.7,412.4 875.1,411.0 875.6,410.1 876.0,411.5 876.5,416.0 876.9,416.7 877.3,411.2 877.8,401.9 878.2,392.5 878.7,387.1 879.1,387.4 879.6,392.3 880.0,399.7 880.4,406.6 880.9,410.5 881.3,410.3 881.8,408.5 882.2,406.8 882.6,406.9 883.1,409.6 883.5,412.7 884.0,413.5 884.4,410.5 884.9,404.8 885.3,398.8 885.7,394.9 886.2,395.3 886.6,402.5 887.1,411.2 887.5,414.3 887.9,411.3 888.4,407.6 888.8,407.4 889.3,408.8 889.7,410.9 890.2,413.0 890.6,414.6 891.0,415.1 891.5,414.5 891.9,413.0 892.4,411.1 892.8,409.1 893.2,407.4 893.7,406.6 894.1,406.3 894.6,405.3 895.0,403.6 895.5,401.7 895.9,400.2 896.3,399.4 896.8,400.1 897.2,403.1 897.7,407.7 898.1,412.7 898.5,416.9 899.0,419.2 899.4,419.0 899.9,417.3 900.3,414.9 900.8,413.2 901.2,413.3 901.6,415.5 902.1,416.5 902.5,415.1 903.0,412.3 903.4,408.8 903.8,405.5 904.3,403.4 904.7,403.0 905.2,403.7 905.6,404.7 906.1,405.0 906.5,401.5 906.9,395.5 907.4,392.3 907.8,396.1 908.3,405.6 908.7,412.9 909.1,414.6 909.6,419.7 910.0,424.8 910.5,425.0 910.9,417.3 911.4,405.7 911.8,397.6 912.2,397.4 912.7,403.4 913.1,411.9 913.6,418.2 914.0,418.5 914.4,410.2 914.9,399.4 915.3,395.1 915.8,407.0 916.2,420.9 916.7,419.9 917.1,414.3 917.5,406.5 918.0,399.6 918.4,396.0 918.9,396.2 919.3,398.0 919.8,400.6 920.2,403.3 920.6,405.2 921.1,405.8 921.5,404.0 922.0,402.3 922.4,404.9 922.8,412.1 923.3,417.5 923.7,415.9 924.2,407.6 924.6,399.9 925.1,399.0 925.5,402.0 925.9,406.6 926.4,410.4 926.8,411.3 927.3,408.1 927.7,402.0 928.1,396.4 928.6,394.4 929.0,397.5 929.5,403.6 929.9,407.7 930.4,407.2 930.8,404.6 931.2,401.6 931.7,400.1 932.1,399.0 932.6,395.6 933.0,391.3 933.4,387.8 933.9,386.5 934.3,386.0 934.8,385.0 935.2,384.4 935.7,384.9 936.1,386.5 936.5,387.7 937.0,388.2 937.4,390.4 937.9,393.7 938.3,396.9 938.7,398.5 939.2,398.7 939.6,398.9 940.1,399.2 940.5,399.4 941.0,399.7 941.4,400.9 941.8,402.5 942.3,404.1 942.7,405.4 943.2,405.8 943.6,404.8 944.0,402.8 944.5,401.5 944.9,401.9 945.4,403.7 945.8,406.6 946.3,410.1 946.7,413.8 947.1,417.1 947.6,419.5 948.0,420.7 948.5,420.1 948.9,416.9 949.3,412.4 949.8,408.4 950.2,406.5 950.7,406.1 951.1,405.1 951.6,404.4 952.0,404.8 952.4,407.3 952.9,410.8 953.3,414.0 953.8,415.7 954.2,415.1 954.6,412.1 955.1,407.5 955.5,402.3 956.0,397.7 956.4,394.9 956.9,394.5 957.3,396.2 957.7,399.4 958.2,402.7 958.6,404.8 959.1,405.5 959.5,408.2 959.9,411.3 960.4,412.1 960.8,407.3 961.3,401.9 961.7,402.5 962.2,407.4 962.6,413.2 963.0,416.4 963.5,414.4 963.9,408.0 964.4,402.8 964.8,402.4 965.3,402.9 965.7,403.8 966.1,404.5 966.6,405.0 967.0,405.6 967.5,408.5 967.9,412.6 968.3,416.2 968.8,417.8 969.2,416.2 969.7,411.6 970.1,408.1 970.6,407.4 971.0,405.2 971.4,402.5 971.9,400.9 972.3,403.1 972.8,411.4 973.2,415.1 973.6,414.9 974.1,414.5 974.5,414.3 975.0,415.4 975.4,418.1 975.9,420.0 976.3,419.1 976.7,415.5 977.2,412.1 977.6,411.7 978.1,414.4 978.5,419.0 978.9,423.5 979.4,426.2 979.8,425.3 980.3,419.4 980.7,413.4 981.2,412.1 981.6,410.4 982.0,407.5 982.5,404.5 982.9,402.5 983.4,402.1 983.8,401.1 984.2,399.6 984.7,398.7 985.1,399.0 985.6,401.7 986.0,405.9 986.5,410.7 986.9,414.5 987.3,416.4 987.8,415.9 988.2,413.5 988.7,410.8 989.1,409.4 989.5,409.9 990.0,411.1 990.4,411.1 990.9,406.7 991.3,399.7 991.8,394.5 992.2,394.0 992.6,397.0 993.1,401.6 993.5,405.4 994.0,406.5 994.4,406.0 994.8,405.3 995.3,405.0 995.7,405.9 996.2,408.1 996.6,410.3 997.1,411.4 997.5,409.9 997.9,406.9 998.4,409.4 998.8,420.8 999.3,424.1 999.7,421.6 1000.1,416.8 1000.6,411.6 1001.0,407.7 1001.5,406.5 1001.9,405.7 1002.4,404.0 1002.8,402.6 1003.2,402.3 1003.7,402.7 1004.1,403.3 1004.6,403.6 1005.0,404.4 1005.5,406.6 1005.9,409.4 1006.3,411.6 1006.8,412.3 1007.2,414.2 1007.7,417.6 1008.1,419.4 1008.5,418.7 1009.0,416.7 1009.4,414.2 1009.9,412.2 1010.3,411.4 1010.8,412.7 1011.2,414.7 1011.6,414.5 1012.1,409.5 1012.5,402.4 1013.0,397.7 1013.4,398.6 1013.8,405.8 1014.3,412.9 1014.7,414.2 1015.2,413.1 1015.6,411.2 1016.1,409.3 1016.5,408.1 1016.9,408.1 1017.4,410.2 1017.8,413.6 1018.3,417.4 1018.7,420.3 1019.1,421.4 1019.6,419.3 1020.0,414.0 1020.5,408.3 1020.9,405.2 1021.4,404.0 1021.8,400.2 1022.2,395.5 1022.7,392.6 1023.1,392.9 1023.6,395.9 1024.0,399.8 1024.4,402.1 1024.9,406.3 1025.3,411.4 1025.8,407.9 1026.2,404.4 1026.7,404.6 1027.1,405.6 1027.5,407.1 1028.0,408.6 1028.4,409.7 1028.9,410.1 1029.3,409.9 1029.7,409.3 1030.2,408.5 1030.6,407.6 1031.1,406.9 1031.5,406.5 1032.0,407.6 1032.4,410.7 1032.8,410.3 1033.3,408.7 1033.7,406.2 1034.2,403.4 1034.6,400.7 1035.0,398.8 1035.5,397.9 1035.9,399.2 1036.4,403.6 1036.8,408.9 1037.3,412.0 1037.7,412.7 1038.1,414.7 1038.6,416.7 1039.0,417.1 1039.5,416.0 1039.9,414.1 1040.3,412.1 1040.8,410.9 1041.2,409.9 1041.7,404.4 1042.1,396.5 1042.6,390.2 1043.0,388.8 1043.4,393.6 1043.9,403.0 1044.3,414.2 1044.8,423.4 1045.2,427.7 1045.6,424.7 1046.1,415.1 1046.5,407.3 1047.0,407.1 1047.4,410.6 1047.9,415.8 1048.3,420.5 1048.7,422.9 1049.2,422.9 1049.6,422.7 1050.1,422.5 1050.5,422.3 1051.0,422.2 1051.4,420.9 1051.8,416.6 1052.3,411.0 1052.7,406.6 1053.2,405.0 1053.6,403.5 1054.0,400.3 1054.5,397.4 1054.9,396.8 1055.4,403.5 1055.8,406.9 1056.3,399.0 1056.7,387.7 1057.1,384.7 1057.6,392.5 1058.0,406.2 1058.5,418.3 1058.9,422.3 1059.3,423.3 1059.8,424.8 1060.2,424.6 1060.7,421.1 1061.1,416.0 1061.6,412.6 1062.0,412.0 1062.4,410.8 1062.9,409.0 1063.3,407.3 1063.8,406.5 1064.2,406.8 1064.6,407.8 1065.1,409.1 1065.5,410.2 1066.0,410.7 1066.4,411.3 1066.9,412.9 1067.3,415.0 1067.7,416.9 1068.2,417.8 1068.6,417.5 1069.1,415.9 1069.5,413.6 1069.9,411.2 1070.4,409.4 1070.8,408.7 1071.3,408.8 1071.7,409.1 1072.2,409.4 1072.6,409.6 1073.0,410.5 1073.5,411.9 1073.9,413.4 1074.4,414.6 1074.8,415.1 1075.2,415.3 1075.7,416.0 1076.1,417.0 1076.6,418.0 1077.0,418.6 1077.5,418.3 1077.9,415.2 1078.3,413.7 1078.8,416.9 1079.2,421.0 1079.7,420.6 1080.1,416.2 1080.5,409.5 1081.0,403.1 1081.4,399.6 1081.9,399.5 1082.3,400.1 1082.8,400.9 1083.2,401.4 1083.6,401.9 1084.1,404.9 1084.5,408.3 1085.0,409.3 1085.4,408.2 1085.8,405.8 1086.3,402.8 1086.7,400.4 1087.2,399.1 1087.6,400.3 1088.1,404.9 1088.5,408.8 1088.9,408.8 1089.4,405.7 1089.8,402.3 1090.3,401.4 1090.7,400.9 1091.1,399.8 1091.6,398.7 1092.0,398.0 1092.5,398.0 1092.9,399.5 1093.4,402.2 1093.8,405.3 1094.2,407.9 1094.7,409.3 1095.1,408.9 1095.6,406.3 1096.0,402.4 1096.5,398.3 1096.9,395.3 1097.3,394.3 1097.8,393.9 1098.2,392.9 1098.7,391.6 1099.1,390.8 1099.5,390.7 1100.0,394.2 1100.4,400.8 1100.9,407.8 1101.3,412.3 1101.8,412.4 1102.2,408.4 1102.6,401.7 1103.1,395.1 1103.5,391.0 1104.0,390.7 1104.4,391.8 1104.8,393.4 1105.3,395.0 1105.7,395.8 1106.2,395.6 1106.6,395.0 1107.1,394.4 1107.5,394.5 1107.9,395.3 1108.4,396.6 1108.8,397.8 1109.3,398.5 1109.7,399.1 1110.1,401.8 1110.6,404.5 1111.0,404.4 1111.5,398.4 1111.9,391.0 1112.4,388.7 1112.8,391.5 1113.2,396.0 1113.7,398.5 1114.1,398.5 1114.6,398.4 1115.0,398.1 1115.4,398.0 1115.9,397.9 1116.3,398.1 1116.8,398.4 1117.2,398.6 1117.7,398.0 1118.1,395.9 1118.5,393.3 1119.0,391.0 1119.4,390.1 1119.9,397.3 1120.3,411.1 1120.7,413.8 1121.2,409.0 1121.6,401.1 1122.1,393.6 1122.5,390.1 1123.0,391.2 1123.4,393.7 1123.8,394.2 1124.3,392.9 1124.7,391.6 1125.2,391.9 1125.6,393.7 1126.0,395.9 1126.5,397.2 1126.9,398.4 1127.4,401.3 1127.8,402.2 1128.3,400.7 1128.7,398.2 1129.1,396.2 1129.6,396.1 1130.0,398.3 1130.5,401.8 1130.9,404.5 1131.3,405.1 1131.8,406.3 1132.2,407.2 1132.7,406.9 1133.1,405.8 1133.6,404.4 1134.0,403.3 1134.4,402.9 1134.9,403.2 1135.3,403.9 1135.8,404.6 1136.2,405.0 1136.7,405.9 1137.1,408.9 1137.5,412.1 1138.0,413.6 1138.4,412.1 1138.9,407.9 1139.3,403.8 1139.7,402.3 1140.2,402.0 1140.6,401.5 1141.1,401.6 1141.5,402.2 1142.0,403.3 1142.4,404.4 1142.8,405.0 1143.3,404.8 1143.7,403.4 1144.2,400.9 1144.6,397.8 1145.0,394.5 1145.5,391.4 1145.9,389.2 1146.4,388.0 1146.8,388.5 1147.3,391.4 1147.7,395.2 1148.1,397.7 1148.6,399.0 1149.0,404.7 1149.5,410.3 1149.9,410.7 1150.3,403.1 1150.8,393.8 1151.2,390.8 1151.7,392.4 1152.1,395.8 1152.6,400.2 1153.0,404.1 1153.4,406.7 1153.9,407.1 1154.3,406.4 1154.8,405.2 1155.2,403.9 1155.6,403.0 1156.1,402.9 1156.5,402.8 1157.0,402.6 1157.4,402.4 1157.9,402.3 1158.3,402.4 1158.7,403.2 1159.2,404.3 1159.6,405.3 1160.1,405.8 1160.5,405.4 1160.9,403.8 1161.4,401.5 1161.8,398.9 1162.3,396.6 1162.7,395.3 1163.2,395.3 1163.6,398.1 1164.0,403.1 1164.5,408.8 1164.9,413.5 1165.4,415.7 1165.8,413.8 1166.2,406.7 1166.7,398.3 1167.1,393.3 1167.6,392.3 1168.0,389.5 1168.5,387.0 1168.9,386.7 1169.3,387.9 1169.8,390.0 1170.2,392.3 1170.7,394.2 1171.1,395.0 1171.5,393.3 1172.0,389.6 1172.4,388.7 1172.9,390.8 1173.3,394.4 1173.8,398.2 1174.2,400.5 1174.6,402.0 1175.1,409.5 1175.5,418.0 1176.0,420.5 1176.4,414.8 1176.8,408.4 1177.3,410.0 1177.7,416.9 1178.2,418.2 1178.6,413.0 1179.1,404.2 1179.5,395.3 1179.9,390.1 1180.4,390.4 1180.8,394.8 1181.3,402.2 1181.7,411.0 1182.2,419.1 1182.6,424.7 1183.0,426.5 1183.5,423.5 1183.9,416.4 1184.4,408.2 1184.8,402.2 1185.2,400.7 1185.7,399.4 1186.1,398.1 1186.6,398.2 1187.0,399.9 1187.5,402.5 1187.9,405.3 1188.3,407.3 1188.8,407.9 1189.2,406.5 1189.7,404.2 1190.1,403.0 1190.5,403.5 1191.0,405.2 1191.4,407.7 1191.9,410.4 1192.3,412.7 1192.8,414.1 1193.2,414.2 1193.6,412.8 1194.1,410.4 1194.5,408.0 1195.0,406.6 1195.4,406.5 1195.8,406.3 1196.3,406.0 1196.7,405.8 1197.2,405.3 1197.6,403.0 1198.1,400.2 1198.5,398.2 1198.9,397.8 1199.4,397.1 1199.8,396.0 1200.3,395.0 1200.7,394.4 1201.1,394.3 1201.6,394.0 1202.0,393.7 1202.5,393.8 1202.9,395.1 1203.4,397.2 1203.8,399.3 1204.2,400.6 1204.7,400.6 1205.1,399.7 1205.6,398.1 1206.0,396.2 1206.4,394.5 1206.9,393.3 1207.3,393.0 1207.8,393.3 1208.2,393.9 1208.7,394.3 1209.1,397.2 1209.5,404.7 1210.0,406.7 1210.4,397.4 1210.9,383.9 1211.3,378.3 1211.7,392.7 1212.2,409.5 1212.6,406.6 1213.1,396.0 1213.5,387.4 1214.0,387.5 1214.4,392.8 1214.8,400.9 1215.3,408.5 1215.7,412.6 1216.2,410.0 1216.6,397.7 1217.0,386.3 1217.5,386.0 1217.9,396.2 1218.4,400.6 1218.8,396.2 1219.3,391.2 1219.7,392.9 1220.1,401.9 1220.6,410.8 1221.0,412.7 1221.5,409.8 1221.9,404.4 1222.3,398.1 1222.8,393.0 1223.2,390.8 1223.7,391.7 1224.1,394.7 1224.6,399.5 1225.0,405.1 1225.4,410.5 1225.9,414.9 1226.3,417.4 1226.8,417.7 1227.2,415.6 1227.7,412.2 1228.1,408.7 1228.5,406.7 1229.0,408.0 1229.4,411.4 1229.9,409.9 1230.3,405.9 1230.7,401.0 1231.2,397.2 1231.6,395.8 1232.1,400.4 1232.5,409.2 1233.0,414.2 1233.4,400.6 1233.8,390.5 1234.3,399.0 1234.7,411.3 1235.2,416.5 1235.6,412.0 1236.0,403.6 1236.5,398.7 1236.9,401.5 1237.4,408.2 1237.8,410.5 1238.3,402.6 1238.7,395.9 1239.1,397.4 1239.6,401.0 1240.0,403.5 1240.5,403.2 1240.9,401.3 1241.3,398.4 1241.8,395.1 1242.2,392.1 1242.7,390.1 1243.1,389.7 1243.6,393.2 1244.0,399.7 1244.4,405.7 1244.9,407.9 1245.3,406.0 1245.8,401.7 1246.2,397.0 1246.6,394.0 1247.1,394.1 1247.5,397.1 1248.0,401.5 1248.4,405.0 1248.9,405.6 1249.3,401.9 1249.7,396.6 1250.2,394.3 1250.6,395.9 1251.1,399.6 1251.5,404.0 1251.9,407.1 1252.4,407.8 1252.8,407.1 1253.3,405.7 1253.7,404.2 1254.2,403.2 1254.6,402.9 1255.0,402.7 1255.5,402.2 1255.9,401.8 1256.4,401.5 1256.8,401.2 1257.2,399.5 1257.7,397.6 1258.1,396.5 1258.6,388.7 1259.0,382.8 1259.5,386.8 1259.9,396.5 1260.3,403.2 1260.8,403.7 1261.2,404.5 1261.7,405.6 1262.1,406.3 1262.5,406.4 1263.0,406.5 1263.4,406.7 1263.9,406.8 1264.3,406.6 1264.8,399.2 1265.2,394.1 1265.6,395.8 1266.1,398.9 1266.5,400.7 1267.0,401.7 1267.4,404.3 1267.8,406.2 1268.3,406.0 1268.7,404.4 1269.2,402.9 1269.6,402.7 1270.1,403.3 1270.5,404.4 1270.9,405.8 1271.4,407.1 1271.8,407.9 1272.3,408.2 1272.7,408.7 1273.2,409.6 1273.6,410.2 1274.0,413.6 1274.5,422.7 1274.9,429.5 1275.4,420.2 1275.8,390.7 1276.2,387.4 1276.7,395.7 1277.1,397.3 1277.6,391.5 1278.0,383.3 1278.5,378.6 1278.9,382.3 1279.3,394.5 1279.8,406.0 1280.2,408.6 1280.7,407.7 1281.1,406.4 1281.5,405.5 1282.0,405.3 1282.4,404.9 1282.9,404.5 1283.3,404.2 1283.8,402.4 1284.2,399.5 1284.6,396.4 1285.1,394.2 1285.5,393.7 1286.0,394.8 1286.4,397.1 1286.8,399.9 1287.3,402.3 1287.7,403.5 1288.2,403.2 1288.6,401.9 1289.1,400.2 1289.5,399.0 1289.9,398.7 1290.4,397.4 1290.8,395.5 1291.3,393.7 1291.7,392.8 1292.1,393.2 1292.6,394.4 1293.0,395.0 1293.5,392.9 1293.9,393.2 1294.4,399.2 1294.8,406.4 1295.2,409.3 1295.7,408.4 1296.1,406.3 1296.6,404.0 1297.0,402.4 1297.4,402.1 1297.9,401.2 1298.3,399.9 1298.8,398.7 1299.2,398.3 1299.7,397.7 1300.1,396.5 1300.5,395.9" fill="none" stroke="#0000ff" stroke-width="1.15" stroke-linejoin="round"/></g>
<rect x="101.5" y="348.6" width="1198.0" height="83.6" fill="none" stroke="#000" stroke-width="0.9"/>
<line x1="105.9" x2="105.9" y1="432.2" y2="435.8" stroke="#000" stroke-width="0.9"/>
<text x="105.9" y="446.8" font-family="'DejaVu Sans','Liberation Sans',sans-serif" font-size="9.8" fill="#000" text-anchor="middle" xml:space="preserve" >3500</text>
<line x1="164.8" x2="164.8" y1="432.2" y2="435.8" stroke="#000" stroke-width="0.9"/>
<text x="164.8" y="446.8" font-family="'DejaVu Sans','Liberation Sans',sans-serif" font-size="9.8" fill="#000" text-anchor="middle" xml:space="preserve" >3600</text>
<line x1="223.7" x2="223.7" y1="432.2" y2="435.8" stroke="#000" stroke-width="0.9"/>
<text x="223.7" y="446.8" font-family="'DejaVu Sans','Liberation Sans',sans-serif" font-size="9.8" fill="#000" text-anchor="middle" xml:space="preserve" >3700</text>
<line x1="282.6" x2="282.6" y1="432.2" y2="435.8" stroke="#000" stroke-width="0.9"/>
<text x="282.6" y="446.8" font-family="'DejaVu Sans','Liberation Sans',sans-serif" font-size="9.8" fill="#000" text-anchor="middle" xml:space="preserve" >3800</text>
<line x1="341.5" x2="341.5" y1="432.2" y2="435.8" stroke="#000" stroke-width="0.9"/>
<text x="341.5" y="446.8" font-family="'DejaVu Sans','Liberation Sans',sans-serif" font-size="9.8" fill="#000" text-anchor="middle" xml:space="preserve" >3900</text>
<line x1="400.4" x2="400.4" y1="432.2" y2="435.8" stroke="#000" stroke-width="0.9"/>
<text x="400.4" y="446.8" font-family="'DejaVu Sans','Liberation Sans',sans-serif" font-size="9.8" fill="#000" text-anchor="middle" xml:space="preserve" >4000</text>
<line x1="459.3" x2="459.3" y1="432.2" y2="435.8" stroke="#000" stroke-width="0.9"/>
<text x="459.29999999999995" y="446.8" font-family="'DejaVu Sans','Liberation Sans',sans-serif" font-size="9.8" fill="#000" text-anchor="middle" xml:space="preserve" >4100</text>
<line x1="518.2" x2="518.2" y1="432.2" y2="435.8" stroke="#000" stroke-width="0.9"/>
<text x="518.1999999999999" y="446.8" font-family="'DejaVu Sans','Liberation Sans',sans-serif" font-size="9.8" fill="#000" text-anchor="middle" xml:space="preserve" >4200</text>
<line x1="577.1" x2="577.1" y1="432.2" y2="435.8" stroke="#000" stroke-width="0.9"/>
<text x="577.1" y="446.8" font-family="'DejaVu Sans','Liberation Sans',sans-serif" font-size="9.8" fill="#000" text-anchor="middle" xml:space="preserve" >4300</text>
<line x1="636.0" x2="636.0" y1="432.2" y2="435.8" stroke="#000" stroke-width="0.9"/>
<text x="636.0" y="446.8" font-family="'DejaVu Sans','Liberation Sans',sans-serif" font-size="9.8" fill="#000" text-anchor="middle" xml:space="preserve" >4400</text>
<line x1="694.9" x2="694.9" y1="432.2" y2="435.8" stroke="#000" stroke-width="0.9"/>
<text x="694.9" y="446.8" font-family="'DejaVu Sans','Liberation Sans',sans-serif" font-size="9.8" fill="#000" text-anchor="middle" xml:space="preserve" >4500</text>
<line x1="753.8" x2="753.8" y1="432.2" y2="435.8" stroke="#000" stroke-width="0.9"/>
<text x="753.8" y="446.8" font-family="'DejaVu Sans','Liberation Sans',sans-serif" font-size="9.8" fill="#000" text-anchor="middle" xml:space="preserve" >4600</text>
<line x1="812.7" x2="812.7" y1="432.2" y2="435.8" stroke="#000" stroke-width="0.9"/>
<text x="812.6999999999999" y="446.8" font-family="'DejaVu Sans','Liberation Sans',sans-serif" font-size="9.8" fill="#000" text-anchor="middle" xml:space="preserve" >4700</text>
<line x1="871.6" x2="871.6" y1="432.2" y2="435.8" stroke="#000" stroke-width="0.9"/>
<text x="871.5999999999999" y="446.8" font-family="'DejaVu Sans','Liberation Sans',sans-serif" font-size="9.8" fill="#000" text-anchor="middle" xml:space="preserve" >4800</text>
<line x1="930.5" x2="930.5" y1="432.2" y2="435.8" stroke="#000" stroke-width="0.9"/>
<text x="930.4999999999999" y="446.8" font-family="'DejaVu Sans','Liberation Sans',sans-serif" font-size="9.8" fill="#000" text-anchor="middle" xml:space="preserve" >4900</text>
<line x1="989.4" x2="989.4" y1="432.2" y2="435.8" stroke="#000" stroke-width="0.9"/>
<text x="989.4" y="446.8" font-family="'DejaVu Sans','Liberation Sans',sans-serif" font-size="9.8" fill="#000" text-anchor="middle" xml:space="preserve" >5000</text>
<line x1="1048.3" x2="1048.3" y1="432.2" y2="435.8" stroke="#000" stroke-width="0.9"/>
<text x="1048.3" y="446.8" font-family="'DejaVu Sans','Liberation Sans',sans-serif" font-size="9.8" fill="#000" text-anchor="middle" xml:space="preserve" >5100</text>
<line x1="1107.2" x2="1107.2" y1="432.2" y2="435.8" stroke="#000" stroke-width="0.9"/>
<text x="1107.2" y="446.8" font-family="'DejaVu Sans','Liberation Sans',sans-serif" font-size="9.8" fill="#000" text-anchor="middle" xml:space="preserve" >5200</text>
<line x1="1166.1" x2="1166.1" y1="432.2" y2="435.8" stroke="#000" stroke-width="0.9"/>
<text x="1166.1000000000001" y="446.8" font-family="'DejaVu Sans','Liberation Sans',sans-serif" font-size="9.8" fill="#000" text-anchor="middle" xml:space="preserve" >5300</text>
<line x1="1225.0" x2="1225.0" y1="432.2" y2="435.8" stroke="#000" stroke-width="0.9"/>
<text x="1225.0" y="446.8" font-family="'DejaVu Sans','Liberation Sans',sans-serif" font-size="9.8" fill="#000" text-anchor="middle" xml:space="preserve" >5400</text>
<line x1="1283.9" x2="1283.9" y1="432.2" y2="435.8" stroke="#000" stroke-width="0.9"/>
<text x="1283.9" y="446.8" font-family="'DejaVu Sans','Liberation Sans',sans-serif" font-size="9.8" fill="#000" text-anchor="middle" xml:space="preserve" >5500</text>
<line x1="97.9" x2="101.5" y1="421.2" y2="421.2" stroke="#000" stroke-width="0.9"/>
<text x="95.9" y="424.9" font-family="'DejaVu Sans','Liberation Sans',sans-serif" font-size="9.8" fill="#000" text-anchor="end" xml:space="preserve" >0</text>
<line x1="97.9" x2="101.5" y1="398.2" y2="398.2" stroke="#000" stroke-width="0.9"/>
<text x="95.9" y="401.94" font-family="'DejaVu Sans','Liberation Sans',sans-serif" font-size="9.8" fill="#000" text-anchor="end" xml:space="preserve" >2</text>
<line x1="97.9" x2="101.5" y1="375.3" y2="375.3" stroke="#000" stroke-width="0.9"/>
<text x="95.9" y="378.97999999999996" font-family="'DejaVu Sans','Liberation Sans',sans-serif" font-size="9.8" fill="#000" text-anchor="end" xml:space="preserve" >4</text>
<line x1="97.9" x2="101.5" y1="352.3" y2="352.3" stroke="#000" stroke-width="0.9"/>
<text x="95.9" y="356.02" font-family="'DejaVu Sans','Liberation Sans',sans-serif" font-size="9.8" fill="#000" text-anchor="end" xml:space="preserve" >6</text>
<text x="106.2" y="346.0" font-family="'DejaVu Sans','Liberation Sans',sans-serif" font-size="9.8" fill="#000">e<tspan font-size="6.9" dy="-4">−17</tspan><tspan dy="4">x2</tspan><tspan font-style="italic">Å</tspan></text>
<rect x="429.0" y="450.7" width="17.4" height="6.0" fill="#ff0000"/>
<text x="452.3" y="456.6" font-family="'DejaVu Sans','Liberation Sans',sans-serif" font-size="7.9" fill="#333" text-anchor="start" xml:space="preserve" >Ly<tspan font-style="italic">α</tspan></text>
<rect x="482.7" y="450.7" width="17.4" height="6.0" fill="#008000"/>
<text x="506.0" y="456.6" font-family="'DejaVu Sans','Liberation Sans',sans-serif" font-size="7.9" fill="#333" text-anchor="start" xml:space="preserve" >OII</text>
<rect x="536.3" y="450.7" width="17.4" height="6.0" fill="#8a2be2"/>
<text x="559.5999999999999" y="456.6" font-family="'DejaVu Sans','Liberation Sans',sans-serif" font-size="7.9" fill="#333" text-anchor="start" xml:space="preserve" >CIV</text>
<rect x="590.3" y="450.7" width="17.4" height="6.0" fill="#800080"/>
<text x="613.5999999999999" y="456.6" font-family="'DejaVu Sans','Liberation Sans',sans-serif" font-size="7.9" fill="#333" text-anchor="start" xml:space="preserve" >CIII</text>
<rect x="643.0" y="450.7" width="17.4" height="6.0" fill="#ff00ff"/>
<text x="666.3" y="456.6" font-family="'DejaVu Sans','Liberation Sans',sans-serif" font-size="7.9" fill="#333" text-anchor="start" xml:space="preserve" >MgII</text>
<rect x="697.9" y="450.7" width="17.4" height="6.0" fill="#0000ff"/>
<text x="721.1999999999999" y="456.6" font-family="'DejaVu Sans','Liberation Sans',sans-serif" font-size="7.9" fill="#333" text-anchor="start" xml:space="preserve" >H<tspan font-style="italic">β</tspan></text>
<rect x="749.3" y="450.7" width="17.4" height="6.0" fill="#4169e1"/>
<text x="772.5999999999999" y="456.6" font-family="'DejaVu Sans','Liberation Sans',sans-serif" font-size="7.9" fill="#333" text-anchor="start" xml:space="preserve" >H<tspan font-style="italic">γ</tspan></text>
<rect x="799.5" y="450.7" width="17.4" height="6.0" fill="#ffa500"/>
<text x="822.8" y="456.6" font-family="'DejaVu Sans','Liberation Sans',sans-serif" font-size="7.9" fill="#333" text-anchor="start" xml:space="preserve" >HeII</text>
<rect x="854.3" y="450.7" width="17.4" height="6.0" fill="#87ceeb"/>
<text x="877.5999999999999" y="456.6" font-family="'DejaVu Sans','Liberation Sans',sans-serif" font-size="7.9" fill="#333" text-anchor="start" xml:space="preserve" >(K)CaII</text>
<rect x="920.0" y="450.7" width="17.4" height="6.0" fill="#87ceeb"/>
<text x="943.3" y="456.6" font-family="'DejaVu Sans','Liberation Sans',sans-serif" font-size="7.9" fill="#333" text-anchor="start" xml:space="preserve" >(H)CaII</text>
<clipPath id="pc0"><rect x="70.0" y="532.8" width="148.3" height="147.3"/></clipPath>
<g clip-path="url(#pc0)"><rect x="70.0" y="532.8" width="148.3" height="147.3" fill="#ddd" filter="url(#bg1)"/><ellipse cx="0" cy="0" rx="40.0" ry="32.7" fill="url(#gal)" transform="translate(118.3,632.6) rotate(-28)"/><ellipse cx="0" cy="0" rx="20.4" ry="32.7" fill="url(#gal2)" transform="translate(214.4,554.2) rotate(-18)"/></g>
<circle cx="164.2" cy="554.7" r="12.4" fill="none" stroke="#555" stroke-width="0.9" stroke-opacity="0.85"/>
<circle cx="123.9" cy="565.3" r="12.4" fill="none" stroke="#555" stroke-width="0.8" stroke-opacity="0.8"/>
<circle cx="123.9" cy="565.3" r="13.3" fill="none" stroke="#777" stroke-width="1.3" stroke-dasharray="2,1.3" stroke-opacity="0.8"/>
<circle cx="148.2" cy="571.6" r="12.4" fill="none" stroke="#555" stroke-width="0.9" stroke-opacity="0.85"/>
<circle cx="171.1" cy="576.2" r="12.4" fill="none" stroke="#555" stroke-width="0.9" stroke-opacity="0.85"/>
<circle cx="108.4" cy="583.6" r="12.4" fill="none" stroke="#555" stroke-width="0.8" stroke-opacity="0.8"/>
<circle cx="108.4" cy="583.6" r="13.3" fill="none" stroke="#777" stroke-width="1.3" stroke-dasharray="2,1.3" stroke-opacity="0.8"/>
<circle cx="194.5" cy="582.6" r="12.4" fill="none" stroke="#555" stroke-width="0.9" stroke-opacity="0.85"/>
<circle cx="178.1" cy="599.8" r="12.4" fill="none" stroke="#555" stroke-width="0.9" stroke-opacity="0.85"/>
<circle cx="200.7" cy="605.1" r="12.4" fill="none" stroke="#555" stroke-width="0.9" stroke-opacity="0.85"/>
<circle cx="114.1" cy="608.6" r="12.4" fill="none" stroke="#555" stroke-width="0.9" stroke-opacity="0.85"/>
<circle cx="185.0" cy="623.1" r="12.4" fill="none" stroke="#555" stroke-width="0.9" stroke-opacity="0.85"/>
<circle cx="97.9" cy="622.5" r="12.4" fill="none" stroke="#555" stroke-width="0.8" stroke-opacity="0.8"/>
<circle cx="97.9" cy="622.5" r="13.3" fill="none" stroke="#777" stroke-width="1.3" stroke-dasharray="2,1.3" stroke-opacity="0.8"/>
<circle cx="168.8" cy="639.8" r="12.4" fill="none" stroke="#555" stroke-width="0.9" stroke-opacity="0.85"/>
<circle cx="117.5" cy="633.9" r="12.4" fill="none" stroke="#555" stroke-width="0.8" stroke-opacity="0.8"/>
<circle cx="117.5" cy="633.9" r="13.3" fill="none" stroke="#777" stroke-width="1.3" stroke-dasharray="2,1.3" stroke-opacity="0.8"/>
<circle cx="146.4" cy="636.2" r="12.4" fill="none" stroke="#555" stroke-width="0.8" stroke-opacity="0.8"/>
<circle cx="146.4" cy="636.2" r="13.3" fill="none" stroke="#777" stroke-width="1.3" stroke-dasharray="2,1.3" stroke-opacity="0.8"/>
<circle cx="129.1" cy="653.5" r="12.4" fill="none" stroke="#555" stroke-width="0.8" stroke-opacity="0.8"/>
<circle cx="129.1" cy="653.5" r="13.3" fill="none" stroke="#777" stroke-width="1.3" stroke-dasharray="2,1.3" stroke-opacity="0.8"/>
<circle cx="152.6" cy="658.2" r="12.4" fill="none" stroke="#555" stroke-width="0.8" stroke-opacity="0.8"/>
<circle cx="152.6" cy="658.2" r="13.3" fill="none" stroke="#777" stroke-width="1.3" stroke-dasharray="2,1.3" stroke-opacity="0.8"/>
<rect x="95.1" y="557.4" width="98.0" height="98.0" fill="none" stroke="#ff0000" stroke-width="1.6"/>
<text x="144.15" y="545.9240000000001" font-family="'DejaVu Sans','Liberation Sans',sans-serif" font-size="10.8" fill="#ff0000" text-anchor="middle" xml:space="preserve" >N</text>
<text x="79.607" y="610.45" font-family="'DejaVu Sans','Liberation Sans',sans-serif" font-size="10.8" fill="#ff0000" text-anchor="middle" xml:space="preserve" >E</text>
<path d="M141.2,606.5h6M144.2,603.5v6" stroke="#ff0000" stroke-width="1.1" fill="none"/>
<circle cx="130.8" cy="587.8" r="12.4" fill="none" stroke="#ff0000" stroke-width="1.3"/>
<circle cx="130.8" cy="587.8" r="13.6" fill="none" stroke="#ff0000" stroke-width="1.6" stroke-dasharray="2.4,1.4"/>
<circle cx="161.5" cy="617.2" r="12.4" fill="none" stroke="#ffa500" stroke-width="1.4"/>
<circle cx="154.9" cy="595.3" r="12.4" fill="none" stroke="#00ff00" stroke-width="1.4"/>
<circle cx="139.1" cy="611.8" r="12.4" fill="none" stroke="#0000ff" stroke-width="1.4"/>
<rect x="70.0" y="532.8" width="148.3" height="147.3" fill="none" stroke="#000" stroke-width="0.9"/>
<text x="144.15" y="526.3" font-family="'DejaVu Sans','Liberation Sans',sans-serif" font-size="12.9" fill="#000" text-anchor="middle" xml:space="preserve" >Fiber Positions</text>
<line x1="78.8" x2="78.8" y1="680.1" y2="684.0" stroke="#000" stroke-width="0.9"/>
<line x1="66.1" x2="70.0" y1="671.8" y2="671.8" stroke="#000" stroke-width="0.9"/>
<text x="78.79" y="695.6" font-family="'DejaVu Sans','Liberation Sans',sans-serif" font-size="10.8" fill="#000" text-anchor="middle" xml:space="preserve" >−4</text>
<text x="62.8" y="675.9100000000001" font-family="'DejaVu Sans','Liberation Sans',sans-serif" font-size="10.8" fill="#000" text-anchor="end" xml:space="preserve" >−4</text>
<line x1="111.5" x2="111.5" y1="680.1" y2="684.0" stroke="#000" stroke-width="0.9"/>
<line x1="66.1" x2="70.0" y1="639.1" y2="639.1" stroke="#000" stroke-width="0.9"/>
<text x="111.47" y="695.6" font-family="'DejaVu Sans','Liberation Sans',sans-serif" font-size="10.8" fill="#000" text-anchor="middle" xml:space="preserve" >−2</text>
<text x="62.8" y="643.23" font-family="'DejaVu Sans','Liberation Sans',sans-serif" font-size="10.8" fill="#000" text-anchor="end" xml:space="preserve" >−2</text>
<line x1="144.2" x2="144.2" y1="680.1" y2="684.0" stroke="#000" stroke-width="0.9"/>
<line x1="66.1" x2="70.0" y1="606.5" y2="606.5" stroke="#000" stroke-width="0.9"/>
<text x="144.15" y="695.6" font-family="'DejaVu Sans','Liberation Sans',sans-serif" font-size="10.8" fill="#000" text-anchor="middle" xml:space="preserve" >0</text>
<text x="62.8" y="610.5500000000001" font-family="'DejaVu Sans','Liberation Sans',sans-serif" font-size="10.8" fill="#000" text-anchor="end" xml:space="preserve" >0</text>
<line x1="176.8" x2="176.8" y1="680.1" y2="684.0" stroke="#000" stroke-width="0.9"/>
<line x1="66.1" x2="70.0" y1="573.8" y2="573.8" stroke="#000" stroke-width="0.9"/>
<text x="176.83" y="695.6" font-family="'DejaVu Sans','Liberation Sans',sans-serif" font-size="10.8" fill="#000" text-anchor="middle" xml:space="preserve" >2</text>
<text x="62.8" y="577.8700000000001" font-family="'DejaVu Sans','Liberation Sans',sans-serif" font-size="10.8" fill="#000" text-anchor="end" xml:space="preserve" >2</text>
<line x1="209.5" x2="209.5" y1="680.1" y2="684.0" stroke="#000" stroke-width="0.9"/>
<line x1="66.1" x2="70.0" y1="541.1" y2="541.1" stroke="#000" stroke-width="0.9"/>
<text x="209.51" y="695.6" font-family="'DejaVu Sans','Liberation Sans',sans-serif" font-size="10.8" fill="#000" text-anchor="middle" xml:space="preserve" >4</text>
<text x="62.8" y="545.19" font-family="'DejaVu Sans','Liberation Sans',sans-serif" font-size="10.8" fill="#000" text-anchor="end" xml:space="preserve" >4</text>
<text x="144.15" y="707.3" font-family="'DejaVu Sans','Liberation Sans',sans-serif" font-size="10.8" fill="#000" text-anchor="middle" xml:space="preserve" >arcsecs</text>
<clipPath id="pc1"><rect x="255.4" y="532.8" width="148.3" height="147.3"/></clipPath>
<g clip-path="url(#pc1)"><rect x="255.4" y="532.8" width="148.3" height="147.3" fill="#440154"/><polygon points="283.8,613.0 292.0,588.5 314.8,562.3 324.6,549.3 337.7,528.0 365.5,528.0 352.4,560.7 350.8,580.3 360.6,590.1 383.5,581.9 408.0,580.3 408.0,655.5 388.4,684.9 303.4,684.9 292.0,647.3" fill="#3e4989" fill-opacity="1.0" filter="url(#blur5)"/><polygon points="287.2,610.7 293.1,592.6 304.7,577.5 316.3,565.9 319.6,559.4 329.6,552.7 339.5,537.8 347.5,528.0 362.2,528.0 349.5,547.8 344.4,561.0 349.5,577.5 357.8,592.6 369.4,594.2 382.7,587.5 395.9,589.1 408.0,597.5 408.0,627.4 391.0,634.1 379.4,635.7 349.5,632.3 336.2,627.4 322.9,640.6 312.9,647.3 299.6,643.9 289.7,630.6" fill="#26828e" fill-opacity="1.0" filter="url(#blur3)"/><polygon points="303.1,684.9 319.6,665.4 349.5,660.5 376.0,653.8 408.0,640.8 408.0,658.9 382.7,668.9 356.0,684.9" fill="#21918c" fill-opacity="1.0" filter="url(#blur3)"/><polygon points="345.9,638.3 378.6,644.0 378.6,639.1 345.9,634.2" fill="#46337e" fill-opacity="0.8" filter="url(#blur3)"/><polygon points="381.8,684.9 408.0,662.0 408.0,684.9" fill="#440154" fill-opacity="0.9" filter="url(#blur3)"/><circle cx="394.3" cy="556.6" r="12.3" fill="#26828e" filter="url(#blur3)"/><circle cx="274.8" cy="537.0" r="6.9" fill="#2f6b8e" filter="url(#blur2)"/><polygon points="288.7,611.4 295.2,592.6 305.0,579.5 315.7,568.9 327.9,559.1 338.5,567.2 345.1,585.2 354.1,596.6 367.1,598.3 383.5,592.6 391.6,598.3 394.1,614.6 383.5,629.3 365.5,631.0 349.2,627.7 336.9,624.4 322.2,635.0 313.2,643.2 301.0,640.8 290.3,629.3" fill="#1fa187" fill-opacity="1.0" filter="url(#blur3)"/><polygon points="291.3,610.7 298.0,594.2 306.3,582.6 316.3,572.6 327.9,563.5 336.2,571.0 342.8,587.5 352.8,599.1 366.0,600.7 382.7,595.8 387.6,600.7 389.2,614.1 381.0,625.7 366.0,627.4 349.5,624.1 336.2,620.7 321.2,630.6 312.9,639.0 303.1,637.3 293.1,627.4" fill="#44bf70" fill-opacity="1.0" filter="url(#blur3)"/><polygon points="322.2,597.5 334.5,596.6 341.8,604.8 339.4,613.8 327.9,610.5 321.4,604.8" fill="#f4e61e" fill-opacity="1.0" filter="url(#blur25)"/><polygon points="311.2,581.9 321.2,576.7 327.9,570.2 332.0,582.6 337.1,597.5 332.8,606.5 324.6,601.5 315.5,595.0 309.9,589.1" fill="#f4e61e" fill-opacity="1.0" filter="url(#blur25)"/><polygon points="332.0,601.9 342.8,604.8 356.0,608.1 369.4,608.1 378.2,606.5 381.8,614.1 372.7,621.6 357.8,621.6 342.8,616.7 332.0,611.4" fill="#f4e61e" fill-opacity="1.0" filter="url(#blur25)"/><polygon points="300.1,621.5 315.2,617.2 318.1,625.7 309.6,635.0 300.1,630.6" fill="#f4e61e" fill-opacity="1.0" filter="url(#blur25)"/><polygon points="286.7,614.6 306.3,683.2 299.3,683.2 264.2,573.8" fill="#440154"/><polygon points="252.8,531.0 252.8,683.2 300.8,683.2" fill="#414487"/></g>
<rect x="280.5" y="557.4" width="98.0" height="98.0" fill="none" stroke="#ff0000" stroke-width="1.1"/>
<text x="329.55" y="545.9240000000001" font-family="'DejaVu Sans','Liberation Sans',sans-serif" font-size="10.8" fill="#ff0000" text-anchor="middle" xml:space="preserve" >N</text>
<text x="265.007" y="610.45" font-family="'DejaVu Sans','Liberation Sans',sans-serif" font-size="10.8" fill="#ff0000" text-anchor="middle" xml:space="preserve" >E</text>
<line x1="336.6" x2="367.1" y1="606.5" y2="606.5" stroke="#ff0000" stroke-width="1.1"/>
<line x1="329.6" x2="329.6" y1="613.5" y2="644.0" stroke="#ff0000" stroke-width="1.1"/>
<line x1="292.0" x2="322.5" y1="606.5" y2="606.5" stroke="#ff0000" stroke-width="1.1"/>
<line x1="329.6" x2="329.6" y1="568.9" y2="599.4" stroke="#ff0000" stroke-width="1.1"/>
<rect x="255.4" y="532.8" width="148.3" height="147.3" fill="none" stroke="#000" stroke-width="0.9"/>
<text x="329.55" y="526.3" font-family="'DejaVu Sans','Liberation Sans',sans-serif" font-size="12.9" fill="#000" text-anchor="middle" xml:space="preserve" >Lineflux Map</text>
<line x1="264.2" x2="264.2" y1="680.1" y2="684.0" stroke="#000" stroke-width="0.9"/>
<line x1="251.5" x2="255.4" y1="671.8" y2="671.8" stroke="#000" stroke-width="0.9"/>
<text x="264.19" y="695.6" font-family="'DejaVu Sans','Liberation Sans',sans-serif" font-size="10.8" fill="#000" text-anchor="middle" xml:space="preserve" >−4</text>
<text x="248.20000000000002" y="675.9100000000001" font-family="'DejaVu Sans','Liberation Sans',sans-serif" font-size="10.8" fill="#000" text-anchor="end" xml:space="preserve" >−4</text>
<line x1="296.9" x2="296.9" y1="680.1" y2="684.0" stroke="#000" stroke-width="0.9"/>
<line x1="251.5" x2="255.4" y1="639.1" y2="639.1" stroke="#000" stroke-width="0.9"/>
<text x="296.87" y="695.6" font-family="'DejaVu Sans','Liberation Sans',sans-serif" font-size="10.8" fill="#000" text-anchor="middle" xml:space="preserve" >−2</text>
<text x="248.20000000000002" y="643.23" font-family="'DejaVu Sans','Liberation Sans',sans-serif" font-size="10.8" fill="#000" text-anchor="end" xml:space="preserve" >−2</text>
<line x1="329.6" x2="329.6" y1="680.1" y2="684.0" stroke="#000" stroke-width="0.9"/>
<line x1="251.5" x2="255.4" y1="606.5" y2="606.5" stroke="#000" stroke-width="0.9"/>
<text x="329.55" y="695.6" font-family="'DejaVu Sans','Liberation Sans',sans-serif" font-size="10.8" fill="#000" text-anchor="middle" xml:space="preserve" >0</text>
<text x="248.20000000000002" y="610.5500000000001" font-family="'DejaVu Sans','Liberation Sans',sans-serif" font-size="10.8" fill="#000" text-anchor="end" xml:space="preserve" >0</text>
<line x1="362.2" x2="362.2" y1="680.1" y2="684.0" stroke="#000" stroke-width="0.9"/>
<line x1="251.5" x2="255.4" y1="573.8" y2="573.8" stroke="#000" stroke-width="0.9"/>
<text x="362.23" y="695.6" font-family="'DejaVu Sans','Liberation Sans',sans-serif" font-size="10.8" fill="#000" text-anchor="middle" xml:space="preserve" >2</text>
<text x="248.20000000000002" y="577.8700000000001" font-family="'DejaVu Sans','Liberation Sans',sans-serif" font-size="10.8" fill="#000" text-anchor="end" xml:space="preserve" >2</text>
<line x1="394.9" x2="394.9" y1="680.1" y2="684.0" stroke="#000" stroke-width="0.9"/>
<line x1="251.5" x2="255.4" y1="541.1" y2="541.1" stroke="#000" stroke-width="0.9"/>
<text x="394.91" y="695.6" font-family="'DejaVu Sans','Liberation Sans',sans-serif" font-size="10.8" fill="#000" text-anchor="middle" xml:space="preserve" >4</text>
<text x="248.20000000000002" y="545.19" font-family="'DejaVu Sans','Liberation Sans',sans-serif" font-size="10.8" fill="#000" text-anchor="end" xml:space="preserve" >4</text>
<text x="329.55" y="707.3" font-family="'DejaVu Sans','Liberation Sans',sans-serif" font-size="10.8" fill="#000" text-anchor="middle" xml:space="preserve" >s/b: 2.18 +/- 0.071</text>
<clipPath id="pc2"><rect x="440.8" y="532.8" width="148.2" height="147.3"/></clipPath>
<g clip-path="url(#pc2)"><rect x="440.8" y="532.8" width="148.2" height="147.3" fill="#ddd" filter="url(#bg2)"/><ellipse cx="0" cy="0" rx="40.0" ry="32.7" fill="url(#gal)" transform="translate(489.1,632.6) rotate(-28)"/><ellipse cx="0" cy="0" rx="20.4" ry="32.7" fill="url(#gal2)" transform="translate(585.2,554.2) rotate(-18)"/></g>
<rect x="465.9" y="557.4" width="98.0" height="98.0" fill="none" stroke="#ff0000" stroke-width="1.1"/>
<text x="514.9" y="545.9240000000001" font-family="'DejaVu Sans','Liberation Sans',sans-serif" font-size="10.8" fill="#ff0000" text-anchor="middle" xml:space="preserve" >N</text>
<text x="450.35699999999997" y="610.45" font-family="'DejaVu Sans','Liberation Sans',sans-serif" font-size="10.8" fill="#ff0000" text-anchor="middle" xml:space="preserve" >E</text>
<line x1="521.9" x2="552.5" y1="606.5" y2="606.5" stroke="#ff0000" stroke-width="1.1"/>
<line x1="514.9" x2="514.9" y1="613.5" y2="644.0" stroke="#ff0000" stroke-width="1.1"/>
<line x1="477.3" x2="507.9" y1="606.5" y2="606.5" stroke="#ff0000" stroke-width="1.1"/>
<line x1="514.9" x2="514.9" y1="568.9" y2="599.4" stroke="#ff0000" stroke-width="1.1"/>
<ellipse cx="0" cy="0" rx="36.8" ry="29.1" fill="none" stroke="#ffd700" stroke-width="1.2" transform="translate(489.1,631.6) rotate(-30)"/>
<rect x="483.4" y="625.6" width="13.1" height="13.1" fill="none" stroke="#0000ff" stroke-width="1.2"/>
<rect x="440.8" y="532.8" width="148.2" height="147.3" fill="none" stroke="#000" stroke-width="0.9"/>
<text x="514.9" y="526.3" font-family="'DejaVu Sans','Liberation Sans',sans-serif" font-size="12.9" fill="#000" text-anchor="middle" xml:space="preserve" >HSC(26.2) r</text>
<line x1="449.5" x2="449.5" y1="680.1" y2="684.0" stroke="#000" stroke-width="0.9"/>
<line x1="436.90000000000003" x2="440.8" y1="671.8" y2="671.8" stroke="#000" stroke-width="0.9"/>
<text x="449.53999999999996" y="695.6" font-family="'DejaVu Sans','Liberation Sans',sans-serif" font-size="10.8" fill="#000" text-anchor="middle" xml:space="preserve" >−4</text>
<text x="433.6" y="675.9100000000001" font-family="'DejaVu Sans','Liberation Sans',sans-serif" font-size="10.8" fill="#000" text-anchor="end" xml:space="preserve" >−4</text>
<line x1="482.2" x2="482.2" y1="680.1" y2="684.0" stroke="#000" stroke-width="0.9"/>
<line x1="436.90000000000003" x2="440.8" y1="639.1" y2="639.1" stroke="#000" stroke-width="0.9"/>
<text x="482.21999999999997" y="695.6" font-family="'DejaVu Sans','Liberation Sans',sans-serif" font-size="10.8" fill="#000" text-anchor="middle" xml:space="preserve" >−2</text>
<text x="433.6" y="643.23" font-family="'DejaVu Sans','Liberation Sans',sans-serif" font-size="10.8" fill="#000" text-anchor="end" xml:space="preserve" >−2</text>
<line x1="514.9" x2="514.9" y1="680.1" y2="684.0" stroke="#000" stroke-width="0.9"/>
<line x1="436.90000000000003" x2="440.8" y1="606.5" y2="606.5" stroke="#000" stroke-width="0.9"/>
<text x="514.9" y="695.6" font-family="'DejaVu Sans','Liberation Sans',sans-serif" font-size="10.8" fill="#000" text-anchor="middle" xml:space="preserve" >0</text>
<text x="433.6" y="610.5500000000001" font-family="'DejaVu Sans','Liberation Sans',sans-serif" font-size="10.8" fill="#000" text-anchor="end" xml:space="preserve" >0</text>
<line x1="547.6" x2="547.6" y1="680.1" y2="684.0" stroke="#000" stroke-width="0.9"/>
<line x1="436.90000000000003" x2="440.8" y1="573.8" y2="573.8" stroke="#000" stroke-width="0.9"/>
<text x="547.5799999999999" y="695.6" font-family="'DejaVu Sans','Liberation Sans',sans-serif" font-size="10.8" fill="#000" text-anchor="middle" xml:space="preserve" >2</text>
<text x="433.6" y="577.8700000000001" font-family="'DejaVu Sans','Liberation Sans',sans-serif" font-size="10.8" fill="#000" text-anchor="end" xml:space="preserve" >2</text>
<line x1="580.3" x2="580.3" y1="680.1" y2="684.0" stroke="#000" stroke-width="0.9"/>
<line x1="436.90000000000003" x2="440.8" y1="541.1" y2="541.1" stroke="#000" stroke-width="0.9"/>
<text x="580.26" y="695.6" font-family="'DejaVu Sans','Liberation Sans',sans-serif" font-size="10.8" fill="#000" text-anchor="middle" xml:space="preserve" >4</text>
<text x="433.6" y="545.19" font-family="'DejaVu Sans','Liberation Sans',sans-serif" font-size="10.8" fill="#000" text-anchor="end" xml:space="preserve" >4</text>
<text x="514.9" y="707.3" font-family="'DejaVu Sans','Liberation Sans',sans-serif" font-size="10.8" fill="#000" text-anchor="middle" xml:space="preserve" >m:20.0  re:2.0"  s:2.2"</text>
<text x="514.9" y="719.6" font-family="'DejaVu Sans','Liberation Sans',sans-serif" font-size="10.8" fill="#000" text-anchor="middle" xml:space="preserve" >EWr: 1, PLAE: 0.025</text>
</svg>
</body></html>
